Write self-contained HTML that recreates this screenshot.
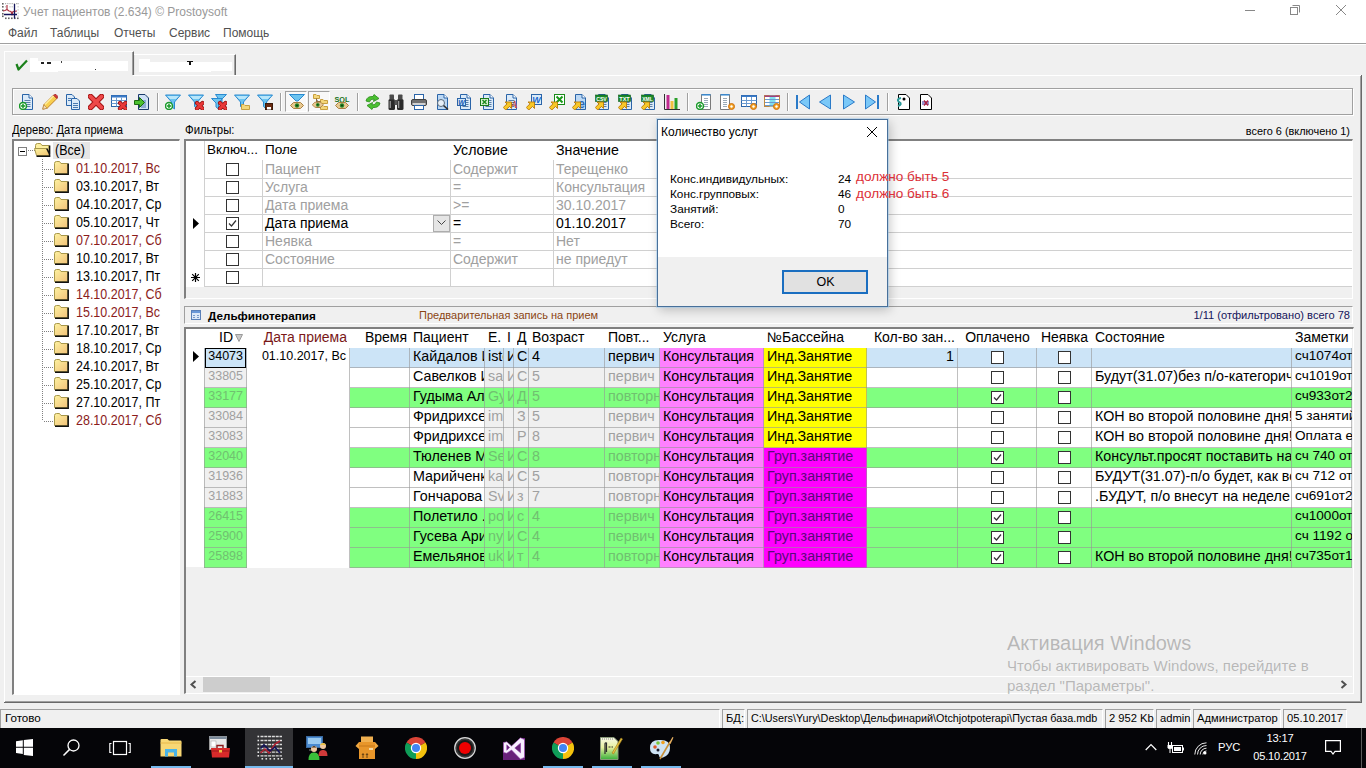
<!DOCTYPE html><html><head><meta charset="utf-8"><style>
html,body{margin:0;padding:0;}
body{width:1366px;height:768px;position:relative;overflow:hidden;background:#f0f0f0;font-family:"Liberation Sans", sans-serif;}
.t{position:absolute;white-space:pre;line-height:1.2;}
div{box-sizing:border-box;}
</style></head><body>
<div style="position:absolute;left:0px;top:0px;width:1366px;height:43px;background:#fff;"></div>
<div style="position:absolute;left:0px;top:43px;width:1366px;height:1px;background:#a0a0a0;"></div>
<div style="position:absolute;left:0px;top:44px;width:1366px;height:1px;background:#fff;"></div>
<svg style="position:absolute;left:0;top:0" width="24" height="24"><rect x="2" y="3" width="1.6" height="1.6" fill="#606060"/><rect x="2" y="6" width="1.6" height="1.6" fill="#606060"/><rect x="2" y="9.5" width="1.6" height="1.6" fill="#606060"/><rect x="2" y="13" width="1.6" height="1.6" fill="#606060"/><rect x="2" y="15.5" width="1.6" height="1.6" fill="#606060"/><rect x="5" y="17.5" width="1.6" height="1.6" fill="#606060"/><rect x="8" y="17.5" width="1.6" height="1.6" fill="#606060"/><rect x="11" y="17.5" width="1.6" height="1.6" fill="#606060"/><rect x="14" y="17.5" width="1.6" height="1.6" fill="#606060"/><rect x="17" y="17.5" width="1.6" height="1.6" fill="#606060"/><rect x="5" y="3" width="1.2" height="1.2" fill="#b0b0b0"/><rect x="7.2" y="3" width="1.2" height="1.2" fill="#b0b0b0"/><rect x="9.4" y="3" width="1.2" height="1.2" fill="#b0b0b0"/><rect x="11.6" y="3" width="1.2" height="1.2" fill="#b0b0b0"/><rect x="13.8" y="3" width="1.2" height="1.2" fill="#b0b0b0"/><rect x="16" y="3" width="1.2" height="1.2" fill="#b0b0b0"/><rect x="17.5" y="3" width="1.2" height="1.2" fill="#b0b0b0"/><rect x="5" y="6.2" width="1.2" height="1.2" fill="#c0c0c0"/><rect x="9.4" y="6.2" width="1.2" height="1.2" fill="#c0c0c0"/><rect x="11.6" y="6.2" width="1.2" height="1.2" fill="#c0c0c0"/><rect x="17.5" y="6.2" width="1.2" height="1.2" fill="#c0c0c0"/><rect x="17.5" y="9.3" width="1.2" height="1.2" fill="#c0c0c0"/><rect x="17.5" y="12.5" width="1.2" height="1.2" fill="#c0c0c0"/><rect x="17.5" y="15.5" width="1.2" height="1.2" fill="#c0c0c0"/><path d="M3 11 L5 10.5 L7 9.5 V5 M7 9.5 L9 11 L11 11.5 L12 14.5 L13 11.5 L17 11" stroke="#a82838" stroke-width="1.1" fill="none"/><path d="M4 14.5 H17 M14.5 4 V18.5" stroke="#14145a" stroke-width="1.3"/></svg>
<div class="t" style="left:23px;top:4.8px;font-size:12px;color:#999;">Учет пациентов (2.634) © Prostoysoft</div>
<svg style="position:absolute;left:1240px;top:0" width="126" height="22"><path d="M5 10.5 H15" stroke="#888" stroke-width="1"/><rect x="50.5" y="7.5" width="7" height="7" fill="none" stroke="#888"/><path d="M52.5 5.5 H59.5 V12.5" fill="none" stroke="#888"/><path d="M96 5 L106 15 M106 5 L96 15" stroke="#888" stroke-width="1"/></svg>
<div class="t" style="left:8px;top:25.8px;font-size:12px;color:#505050;">Файл</div>
<div class="t" style="left:50px;top:25.8px;font-size:12px;color:#505050;">Таблицы</div>
<div class="t" style="left:114px;top:25.8px;font-size:12px;color:#505050;">Отчеты</div>
<div class="t" style="left:169px;top:25.8px;font-size:12px;color:#505050;">Сервис</div>
<div class="t" style="left:223px;top:25.8px;font-size:12px;color:#505050;">Помощь</div>
<div style="position:absolute;left:133px;top:54px;width:103px;height:22px;border-top:1px solid #fff;border-right:1px solid #696969;background:#f0f0f0;"></div>
<div style="position:absolute;left:134px;top:55px;width:1px;height:20px;background:#e3e3e3;"></div>
<div style="position:absolute;left:234px;top:55px;width:1px;height:20px;background:#a0a0a0;"></div>
<div style="position:absolute;left:4px;top:51px;width:130px;height:25px;border-top:1px solid #fff;border-left:1px solid #fff;border-right:1px solid #696969;background:#f0f0f0;"></div>
<div style="position:absolute;left:132px;top:52px;width:1px;height:23px;background:#a0a0a0;"></div>
<div style="position:absolute;left:30px;top:58px;width:8px;height:14px;background:#fff;"></div>
<div style="position:absolute;left:30px;top:61px;width:98px;height:10px;background:#fff;"></div>
<div style="position:absolute;left:30px;top:70px;width:28px;height:2px;background:#fff;"></div>
<div style="position:absolute;left:41px;top:62px;width:3px;height:2px;background:#222;"></div>
<div style="position:absolute;left:47px;top:62px;width:4px;height:2px;background:#222;"></div>
<div style="position:absolute;left:61px;top:61px;width:1px;height:2px;background:#444;"></div>
<div style="position:absolute;left:95px;top:69px;width:1px;height:1px;background:#333;"></div>
<div style="position:absolute;left:139px;top:59px;width:11px;height:12px;background:#fff;"></div>
<div style="position:absolute;left:139px;top:62px;width:93px;height:9px;background:#fff;"></div>
<div style="position:absolute;left:139px;top:70px;width:72px;height:2px;background:#fff;"></div>
<div style="position:absolute;left:187px;top:61px;width:6px;height:1px;background:#111;"></div>
<div style="position:absolute;left:189px;top:61px;width:2px;height:4px;background:#111;"></div>
<svg style="position:absolute;left:15px;top:59px" width="14" height="12"><path d="M1.5 5 L3.5 10.5 L12 1.5" stroke="#1a801a" stroke-width="2.2" fill="none" stroke-linejoin="round"/></svg>
<div style="position:absolute;left:133px;top:75px;width:1228px;height:1px;background:#fff;"></div>
<div style="position:absolute;left:4px;top:75px;width:1px;height:628px;background:#fff;"></div>
<div style="position:absolute;left:1361px;top:75px;width:1px;height:628px;background:#696969;"></div>
<div style="position:absolute;left:1360px;top:76px;width:1px;height:626px;background:#a0a0a0;"></div>
<div style="position:absolute;left:4px;top:702px;width:1358px;height:1px;background:#696969;"></div>
<div style="position:absolute;left:5px;top:701px;width:1355px;height:1px;background:#a0a0a0;"></div>
<div style="position:absolute;left:12px;top:88px;width:1341px;height:27px;border-top:1px solid #a0a0a0;border-left:1px solid #a0a0a0;border-bottom:1px solid #a0a0a0;border-right:1px solid #a0a0a0;box-shadow:inset 1px 1px 0 #fff, 1px 1px 0 #fff;"></div>
<div style="position:absolute;left:157px;top:93px;width:1px;height:18px;background:#a0a0a0;"></div>
<div style="position:absolute;left:158px;top:93px;width:1px;height:18px;background:#fff;"></div>
<div style="position:absolute;left:280px;top:93px;width:1px;height:18px;background:#a0a0a0;"></div>
<div style="position:absolute;left:281px;top:93px;width:1px;height:18px;background:#fff;"></div>
<div style="position:absolute;left:357px;top:93px;width:1px;height:18px;background:#a0a0a0;"></div>
<div style="position:absolute;left:358px;top:93px;width:1px;height:18px;background:#fff;"></div>
<div style="position:absolute;left:687px;top:93px;width:1px;height:18px;background:#a0a0a0;"></div>
<div style="position:absolute;left:688px;top:93px;width:1px;height:18px;background:#fff;"></div>
<div style="position:absolute;left:787px;top:93px;width:1px;height:18px;background:#a0a0a0;"></div>
<div style="position:absolute;left:788px;top:93px;width:1px;height:18px;background:#fff;"></div>
<div style="position:absolute;left:887px;top:93px;width:1px;height:18px;background:#a0a0a0;"></div>
<div style="position:absolute;left:888px;top:93px;width:1px;height:18px;background:#fff;"></div>
<div style="position:absolute;left:285px;top:91px;width:22px;height:21px;border-top:1px solid #a0a0a0;border-left:1px solid #a0a0a0;border-bottom:1px solid #fff;border-right:1px solid #fff;background:#f8f8f8;"></div>
<div style="position:absolute;left:308px;top:91px;width:22px;height:21px;border-top:1px solid #a0a0a0;border-left:1px solid #a0a0a0;border-bottom:1px solid #fff;border-right:1px solid #fff;background:#f8f8f8;"></div>
<svg style="position:absolute;left:19px;top:94px" width="16" height="16" viewBox="0 0 16 16"><path d="M3.5 0.5 H10 L13.5 4 V15.5 H3.5Z" fill="#dbeaf8" stroke="#2a64a8"/><path d="M10 0.5 V4 H13.5" fill="#fff" stroke="#2a64a8"/><path d="M5.5 6.5 H11.5 M5.5 8.5 H11.5 M5.5 10.5 H11.5 M5.5 12.5 H11.5" stroke="#5a7fa8"/><circle cx="4" cy="12" r="3.5" fill="#fff" stroke="#1a9a2a" stroke-width="1.5"/><path d="M4 9.8 V14.2 M1.8 12 H6.2" stroke="#1a9a2a" stroke-width="1.5"/></svg>
<svg style="position:absolute;left:42px;top:94px" width="16" height="16" viewBox="0 0 16 16"><path d="M0.8 15.2 L1.8 10.8 L11.5 1.1 L14.9 4.5 L5.2 14.2 Z" fill="#f8cf50" stroke="#c0802a" stroke-width="1"/><path d="M3 10.5 L12 1.5" stroke="#fff0a0" stroke-width="1.2"/><path d="M11.5 1.1 L14.9 4.5 L15.5 3.2 Q15.5 1.5 14 0.5 Q12.8 0.3 11.5 1.1Z" fill="#d83a3a" stroke="#a02020" stroke-width="0.8"/><path d="M0.8 15.2 L1.8 10.8 L5.2 14.2Z" fill="#f4dcb0" stroke="#b08040" stroke-width="0.6"/></svg>
<svg style="position:absolute;left:65px;top:94px" width="16" height="16" viewBox="0 0 16 16"><path d="M1.5 0.5 H7 L9.5 3 V11.5 H1.5Z" fill="#dbeaf8" stroke="#2a64a8"/><path d="M6.5 4.5 H12 L14.5 7 V15.5 H6.5Z" fill="#dbeaf8" stroke="#2a64a8"/><path d="M3 4.5 H6 M3 6.5 H6 M8 9.5 H13 M8 11.5 H13 M8 13.5 H13" stroke="#4a7ab0"/></svg>
<svg style="position:absolute;left:88px;top:94px" width="16" height="16" viewBox="0 0 16 16"><path d="M2.5 2.5 L13.5 13.5 M13.5 2.5 L2.5 13.5" stroke="#a01010" stroke-width="5.6" stroke-linecap="round"/><path d="M2.5 2.5 L13.5 13.5 M13.5 2.5 L2.5 13.5" stroke="#ee4848" stroke-width="3.8" stroke-linecap="round"/></svg>
<svg style="position:absolute;left:111px;top:94px" width="16" height="16" viewBox="0 0 16 16"><rect x="0.5" y="1.5" width="15" height="11" fill="#fff" stroke="#2a64a8"/><rect x="0.5" y="1.5" width="15" height="2" fill="#3a7ac8"/><path d="M0.5 6.5 H15.5 M0.5 9.5 H15.5 M5.5 3.5 V12.5 M10.5 3.5 V12.5" stroke="#6a9ad0"/><path d="M9 9 L14.5 14.5 M14.5 9 L9 14.5" stroke="#901010" stroke-width="4.2" stroke-linecap="round"/><path d="M9 9 L14.5 14.5 M14.5 9 L9 14.5" stroke="#e83838" stroke-width="2.6" stroke-linecap="round"/></svg>
<svg style="position:absolute;left:134px;top:94px" width="16" height="16" viewBox="0 0 16 16"><path d="M4.5 0.5 H11 L14.5 4 V15.5 H4.5Z" fill="#cfe0f5" stroke="#1a3a6a"/><path d="M7 7 H12 M7 9 H12 M7 11 H12 M7 13 H12" stroke="#4a7ab0"/><path d="M0.5 6.5 H5.5 V3.5 L10.5 8.5 L5.5 13.5 V10.5 H0.5Z" fill="#4ac030" stroke="#1a6a10"/></svg>
<svg style="position:absolute;left:165px;top:94px" width="16" height="16" viewBox="0 0 16 16"><path d="M0.5 1 H15.5 L9.5 8 V15 L6.5 12.5 V8 Z" fill="#6cc4f0" stroke="#2a8ad0"/><path d="M2 2 H14 L11 5 H5Z" fill="#b8e6fa"/><circle cx="4" cy="12" r="3.5" fill="#fff" stroke="#1a9a2a" stroke-width="1.5"/><path d="M4 9.8 V14.2 M1.8 12 H6.2" stroke="#1a9a2a" stroke-width="1.5"/></svg>
<svg style="position:absolute;left:188px;top:94px" width="16" height="16" viewBox="0 0 16 16"><path d="M0.5 1 H15.5 L9.5 8 V15 L6.5 12.5 V8 Z" fill="#6cc4f0" stroke="#2a8ad0"/><path d="M2 2 H14 L11 5 H5Z" fill="#b8e6fa"/><path d="M9 9 L14.5 14.5 M14.5 9 L9 14.5" stroke="#901010" stroke-width="4.2" stroke-linecap="round"/><path d="M9 9 L14.5 14.5 M14.5 9 L9 14.5" stroke="#e83838" stroke-width="2.6" stroke-linecap="round"/></svg>
<svg style="position:absolute;left:211px;top:94px" width="16" height="16" viewBox="0 0 16 16"><path d="M4.5 0.5 H15.5 L11 5 V10 Z" fill="#6cc4f0" stroke="#2a8ad0"/><path d="M0.5 4.5 H11.5 L7.5 9 V15 L5 13 V9Z" fill="#6cc4f0" stroke="#2a8ad0"/><path d="M9 9 L14.5 14.5 M14.5 9 L9 14.5" stroke="#901010" stroke-width="4.2" stroke-linecap="round"/><path d="M9 9 L14.5 14.5 M14.5 9 L9 14.5" stroke="#e83838" stroke-width="2.6" stroke-linecap="round"/></svg>
<svg style="position:absolute;left:234px;top:94px" width="16" height="16" viewBox="0 0 16 16"><path d="M0.5 1 H15.5 L9.5 8 V15 L6.5 12.5 V8 Z" fill="#6cc4f0" stroke="#2a8ad0"/><path d="M2 2 H14 L11 5 H5Z" fill="#b8e6fa"/><path d="M7.5 10.5 H10 L11 11.5 H15.5 V15.5 H7.5Z" fill="#f4d77a" stroke="#c8a040"/></svg>
<svg style="position:absolute;left:257px;top:94px" width="16" height="16" viewBox="0 0 16 16"><path d="M0.5 1 H15.5 L9.5 8 V15 L6.5 12.5 V8 Z" fill="#6cc4f0" stroke="#2a8ad0"/><path d="M2 2 H14 L11 5 H5Z" fill="#b8e6fa"/><rect x="8.5" y="9.5" width="7" height="6" fill="#6a2a10" stroke="#3a1a0a"/><rect x="10" y="13" width="4" height="2.5" fill="#fff"/></svg>
<svg style="position:absolute;left:289px;top:94px" width="16" height="16" viewBox="0 0 16 16"><path d="M0.5 0.5 H15.5 L9 7 H7Z" fill="#6cc4f0" stroke="#2a8ad0"/><path d="M1.5 11.5 L4.5 8.5 H11.5 L14.5 11.5 L11.5 14.5 H4.5Z" fill="#e8c890" stroke="#a88040"/><circle cx="8" cy="11.5" r="2.2" fill="#2a8a2a"/><circle cx="8" cy="11.5" r="0.9" fill="#0a3a0a"/></svg>
<svg style="position:absolute;left:312px;top:94px" width="16" height="16" viewBox="0 0 16 16"><path d="M1.5 0.5 H4 L5 1.5 H7.5 V4.5 H1.5Z" fill="#f4d77a" stroke="#c8a040"/><path d="M8.5 5.5 H11 L12 6.5 H15.5 V9.5 H8.5Z" fill="#f4d77a" stroke="#c8a040"/><path d="M8.5 11.5 H11 L12 12.5 H15.5 V15.5 H8.5Z" fill="#f4d77a" stroke="#c8a040"/><path d="M4.5 4.5 V13.5 H8.5 M4.5 7.5 H8.5" stroke="#8a6a3a"/><g transform="translate(-1,1) scale(0.85)"><path d="M1.5 11.5 L4.5 8.5 H11.5 L14.5 11.5 L11.5 14.5 H4.5Z" fill="#e8c890" stroke="#a88040"/><circle cx="8" cy="11.5" r="2.2" fill="#2a8a2a"/><circle cx="8" cy="11.5" r="0.9" fill="#0a3a0a"/></g></svg>
<svg style="position:absolute;left:334px;top:94px" width="16" height="16" viewBox="0 0 16 16"><text x="8" y="7.5" font-family="Liberation Sans" font-weight="bold" font-size="8" fill="#187018" text-anchor="middle" textLength="15" lengthAdjust="spacingAndGlyphs">SQL</text><path d="M1.5 11.5 L4.5 8.5 H11.5 L14.5 11.5 L11.5 14.5 H4.5Z" fill="#e8c890" stroke="#a88040"/><circle cx="8" cy="11.5" r="2.2" fill="#2a8a2a"/><circle cx="8" cy="11.5" r="0.9" fill="#0a3a0a"/></svg>
<svg style="position:absolute;left:365px;top:94px" width="16" height="16" viewBox="0 0 16 16"><path d="M1 7 Q2 2 8 2.5 L9 0.5 L14 4.5 L8.5 7.5 L9 5 Q5 5 4.5 8Z" fill="#4ac030" stroke="#2a8a1a" stroke-width="0.8"/><path d="M15 9 Q14 14 8 13.5 L7 15.5 L2 11.5 L7.5 8.5 L7 11 Q11 11 11.5 8Z" fill="#4ac030" stroke="#2a8a1a" stroke-width="0.8"/></svg>
<svg style="position:absolute;left:388px;top:94px" width="16" height="16" viewBox="0 0 16 16"><rect x="0.5" y="5" width="6.5" height="11" rx="1.5" fill="#2a2a2a"/><rect x="9" y="5" width="6.5" height="11" rx="1.5" fill="#2a2a2a"/><rect x="1.5" y="0.5" width="4.5" height="5" rx="0.8" fill="#4a4a4a"/><rect x="10" y="0.5" width="4.5" height="5" rx="0.8" fill="#4a4a4a"/><rect x="6.5" y="6" width="3" height="5" fill="#555"/><path d="M2.2 7 V14 M10.7 7 V14" stroke="#aaa" stroke-width="1.1"/></svg>
<svg style="position:absolute;left:411px;top:94px" width="16" height="16" viewBox="0 0 16 16"><rect x="3.5" y="0.5" width="9" height="5" fill="#fff" stroke="#2a64a8"/><rect x="0.5" y="5.5" width="15" height="6" rx="1.5" fill="#707070" stroke="#404040"/><rect x="1.5" y="9" width="13" height="2" fill="#d0d0d0"/><rect x="3.5" y="11.5" width="9" height="4" fill="#fff" stroke="#2a64a8"/></svg>
<svg style="position:absolute;left:434px;top:94px" width="16" height="16" viewBox="0 0 16 16"><path d="M3.5 0.5 H10 L13.5 4 V15.5 H3.5Z" fill="#bcd8f4" stroke="#2a64a8"/><path d="M10 0.5 V4 H13.5" fill="#fff" stroke="#2a64a8"/><circle cx="7" cy="9" r="3.5" fill="#e8f0f8" stroke="#5a6a7a"/><path d="M9.5 11.5 L14 15.5" stroke="#303030" stroke-width="1.6"/></svg>
<svg style="position:absolute;left:457px;top:94px" width="16" height="16" viewBox="0 0 16 16"><path d="M3.5 0.5 H10 L13.5 4 V15.5 H3.5Z" fill="#dbeaf8" stroke="#2a64a8"/><path d="M10 0.5 V4 H13.5" fill="#fff" stroke="#2a64a8"/><path d="M5.5 6.5 H11.5 M5.5 8.5 H11.5 M5.5 10.5 H11.5 M5.5 12.5 H11.5" stroke="#5a7fa8"/><rect x="0.5" y="4.5" width="8" height="7" fill="#cfe6fa" stroke="#2a64a8"/><text x="4.5" y="10.5" font-family="Liberation Sans" font-weight="bold" font-style="italic" font-size="7" fill="#1a5ab0" text-anchor="middle">W</text></svg>
<svg style="position:absolute;left:480px;top:94px" width="16" height="16" viewBox="0 0 16 16"><path d="M3.5 0.5 H10 L13.5 4 V15.5 H3.5Z" fill="#dbeaf8" stroke="#2a64a8"/><path d="M10 0.5 V4 H13.5" fill="#fff" stroke="#2a64a8"/><path d="M5.5 6.5 H11.5 M5.5 8.5 H11.5 M5.5 10.5 H11.5 M5.5 12.5 H11.5" stroke="#5a7fa8"/><rect x="0.5" y="4.5" width="8" height="7" fill="#d8f0d0" stroke="#1a7a1a"/><path d="M2.5 6 L6.5 10 M6.5 6 L2.5 10" stroke="#1a8a1a" stroke-width="1.4"/></svg>
<svg style="position:absolute;left:503px;top:94px" width="16" height="16" viewBox="0 0 16 16"><path d="M3.5 0.5 H10 L13.5 4 V15.5 H3.5Z" fill="#dbeaf8" stroke="#2a64a8"/><path d="M10 0.5 V4 H13.5" fill="#fff" stroke="#2a64a8"/><path d="M5.5 6.5 H11.5 M5.5 8.5 H11.5 M5.5 10.5 H11.5 M5.5 12.5 H11.5" stroke="#5a7fa8"/><text x="11" y="14" font-family="Liberation Serif" font-style="italic" font-size="10" fill="#c03030" text-anchor="middle">A</text><path d="M8.5 8 V14.5 L6.5 12.5 L2.8 16 L0.3 13.5 L4 9.8 L2 8Z" fill="#f8c828" stroke="#b8780a" stroke-width="0.9" stroke-linejoin="round"/></svg>
<svg style="position:absolute;left:526px;top:94px" width="16" height="16" viewBox="0 0 16 16"><rect x="5.5" y="0.5" width="10" height="10" fill="#dbeaf8" stroke="#2a64a8"/><text x="10.5" y="9" font-family="Liberation Sans" font-weight="bold" font-style="italic" font-size="9" fill="#1a6ad0" text-anchor="middle">W</text><path d="M8.5 8 V14.5 L6.5 12.5 L2.8 16 L0.3 13.5 L4 9.8 L2 8Z" fill="#f8c828" stroke="#b8780a" stroke-width="0.9" stroke-linejoin="round"/></svg>
<svg style="position:absolute;left:549px;top:94px" width="16" height="16" viewBox="0 0 16 16"><rect x="5.5" y="0.5" width="10" height="10" fill="#fff" stroke="#1a8a1a"/><path d="M7.5 2.5 L13.5 8.5 M13.5 2.5 L7.5 8.5" stroke="#1a9a1a" stroke-width="2"/><path d="M8.5 8 V14.5 L6.5 12.5 L2.8 16 L0.3 13.5 L4 9.8 L2 8Z" fill="#f8c828" stroke="#b8780a" stroke-width="0.9" stroke-linejoin="round"/></svg>
<svg style="position:absolute;left:572px;top:94px" width="16" height="16" viewBox="0 0 16 16"><path d="M3.5 0.5 H10 L13.5 4 V15.5 H3.5Z" fill="#bcd8f4" stroke="#2a64a8"/><path d="M10 0.5 V4 H13.5" fill="#fff" stroke="#2a64a8"/><text x="9.5" y="13.5" font-family="Liberation Sans" font-weight="bold" font-size="12" fill="#2a6ab8" text-anchor="middle">e</text><path d="M8.5 8 V14.5 L6.5 12.5 L2.8 16 L0.3 13.5 L4 9.8 L2 8Z" fill="#f8c828" stroke="#b8780a" stroke-width="0.9" stroke-linejoin="round"/></svg>
<svg style="position:absolute;left:595px;top:94px" width="16" height="16" viewBox="0 0 16 16"><path d="M3.5 0.5 H10 L13.5 4 V15.5 H3.5Z" fill="#dbeaf8" stroke="#2a64a8"/><path d="M10 0.5 V4 H13.5" fill="#fff" stroke="#2a64a8"/><path d="M5.5 6.5 H11.5 M5.5 8.5 H11.5 M5.5 10.5 H11.5 M5.5 12.5 H11.5" stroke="#5a7fa8"/><rect x="0.5" y="1" width="12" height="6.5" fill="#1a8a2a" stroke="#0a5a1a" stroke-width="0.6"/><text x="6.5" y="6.6" font-family="Liberation Sans" font-weight="bold" font-size="6.2" fill="#fff" text-anchor="middle" textLength="10.5" lengthAdjust="spacingAndGlyphs">CSV</text><path d="M8.5 8 V14.5 L6.5 12.5 L2.8 16 L0.3 13.5 L4 9.8 L2 8Z" fill="#f8c828" stroke="#b8780a" stroke-width="0.9" stroke-linejoin="round"/></svg>
<svg style="position:absolute;left:618px;top:94px" width="16" height="16" viewBox="0 0 16 16"><path d="M3.5 0.5 H10 L13.5 4 V15.5 H3.5Z" fill="#dbeaf8" stroke="#2a64a8"/><path d="M10 0.5 V4 H13.5" fill="#fff" stroke="#2a64a8"/><path d="M5.5 6.5 H11.5 M5.5 8.5 H11.5 M5.5 10.5 H11.5 M5.5 12.5 H11.5" stroke="#5a7fa8"/><rect x="0.5" y="1" width="12" height="6.5" fill="#1a8a2a" stroke="#0a5a1a" stroke-width="0.6"/><text x="6.5" y="6.6" font-family="Liberation Sans" font-weight="bold" font-size="6.2" fill="#fff" text-anchor="middle" textLength="10.5" lengthAdjust="spacingAndGlyphs">TXT</text><path d="M8.5 8 V14.5 L6.5 12.5 L2.8 16 L0.3 13.5 L4 9.8 L2 8Z" fill="#f8c828" stroke="#b8780a" stroke-width="0.9" stroke-linejoin="round"/></svg>
<svg style="position:absolute;left:641px;top:94px" width="16" height="16" viewBox="0 0 16 16"><path d="M3.5 0.5 H10 L13.5 4 V15.5 H3.5Z" fill="#dbeaf8" stroke="#2a64a8"/><path d="M10 0.5 V4 H13.5" fill="#fff" stroke="#2a64a8"/><path d="M5.5 6.5 H11.5 M5.5 8.5 H11.5 M5.5 10.5 H11.5 M5.5 12.5 H11.5" stroke="#5a7fa8"/><rect x="0.5" y="1" width="12" height="6.5" fill="#1a8a2a" stroke="#0a5a1a" stroke-width="0.6"/><text x="6.5" y="6.6" font-family="Liberation Sans" font-weight="bold" font-size="6.2" fill="#fff" text-anchor="middle" textLength="10.5" lengthAdjust="spacingAndGlyphs">XML</text><path d="M8.5 8 V14.5 L6.5 12.5 L2.8 16 L0.3 13.5 L4 9.8 L2 8Z" fill="#f8c828" stroke="#b8780a" stroke-width="0.9" stroke-linejoin="round"/></svg>
<svg style="position:absolute;left:664px;top:94px" width="16" height="16" viewBox="0 0 16 16"><path d="M0.5 0 V15.5 H16" stroke="#303030" fill="none"/><rect x="2.5" y="1" width="3" height="14" fill="#c02a90"/><rect x="6.5" y="7" width="3" height="8" fill="#f0c040"/><rect x="10.5" y="4" width="3" height="11" fill="#2aa02a"/></svg>
<svg style="position:absolute;left:696px;top:94px" width="16" height="16" viewBox="0 0 16 16"><path d="M5.5 0.5 H14.5 V15.5 H5.5Z" fill="#fff" stroke="#7a7a7a"/><path d="M5.5 0.8 H14.5" stroke="#3a8ad0" stroke-width="1.5"/><path d="M8 4.5 H12 M8 6.5 H12 M8 8.5 H12 M8 10.5 H12 M8 12.5 H12" stroke="#9aaab8"/><circle cx="4" cy="12" r="3.5" fill="#fff" stroke="#1a9a2a" stroke-width="1.5"/><path d="M4 9.8 V14.2 M1.8 12 H6.2" stroke="#1a9a2a" stroke-width="1.5"/></svg>
<svg style="position:absolute;left:719px;top:94px" width="16" height="16" viewBox="0 0 16 16"><path d="M1.5 0.5 H10.5 V15.5 H1.5Z" fill="#fff" stroke="#7a7a7a"/><path d="M1.5 0.8 H10.5" stroke="#3a8ad0" stroke-width="1.5"/><path d="M4 4.5 H8 M4 6.5 H8 M4 8.5 H8 M4 10.5 H8 M4 12.5 H8" stroke="#9aaab8"/><circle cx="12.5" cy="12.5" r="3" fill="#f0a020" stroke="#d07010"/><circle cx="12.5" cy="12.5" r="1.2" fill="#fff"/></svg>
<svg style="position:absolute;left:741px;top:94px" width="16" height="16" viewBox="0 0 16 16"><rect x="0.5" y="1.5" width="15" height="11" fill="#fff" stroke="#2a64a8"/><rect x="0.5" y="1.5" width="15" height="1.5" fill="#3a7ac8"/><path d="M0.5 6.5 H15.5 M0.5 9.5 H15.5 M5.5 3 V12.5 M10.5 3 V12.5" stroke="#6a9ad0"/><circle cx="12.5" cy="12.5" r="3" fill="#f0a020" stroke="#d07010"/><circle cx="12.5" cy="12.5" r="1.2" fill="#fff"/></svg>
<svg style="position:absolute;left:764px;top:94px" width="16" height="16" viewBox="0 0 16 16"><rect x="0.5" y="1.5" width="15" height="11" fill="#fff" stroke="#c08a40"/><rect x="5.5" y="1.5" width="6" height="11" fill="#80e0f0"/><rect x="0.5" y="1.5" width="15" height="1.5" fill="#a04080"/><path d="M1 5.5 H15 M1 8.5 H15 M1 11.5 H15" stroke="#6a9ad0"/><circle cx="12.5" cy="12.5" r="3" fill="#f0a020" stroke="#d07010"/><circle cx="12.5" cy="12.5" r="1.2" fill="#fff"/></svg>
<svg style="position:absolute;left:795px;top:94px" width="16" height="16" viewBox="0 0 16 16"><rect x="1" y="1" width="2" height="14" fill="#2a7ac8"/><path d="M14.5 1 V15 L4.5 8Z" fill="#7ac8f8" stroke="#2a7ac8"/></svg>
<svg style="position:absolute;left:818px;top:94px" width="16" height="16" viewBox="0 0 16 16"><path d="M12.5 1 V15 L1.5 8Z" fill="#7ac8f8" stroke="#2a7ac8"/></svg>
<svg style="position:absolute;left:841px;top:94px" width="16" height="16" viewBox="0 0 16 16"><path d="M2.5 1 V15 L13.5 8Z" fill="#7ac8f8" stroke="#2a7ac8"/></svg>
<svg style="position:absolute;left:864px;top:94px" width="16" height="16" viewBox="0 0 16 16"><rect x="13" y="1" width="2" height="14" fill="#2a7ac8"/><path d="M1.5 1 V15 L11.5 8Z" fill="#7ac8f8" stroke="#2a7ac8"/></svg>
<svg style="position:absolute;left:895px;top:94px" width="16" height="16" viewBox="0 0 16 16"><path d="M3.5 0.5 H11 L14.5 4 V15.5 H3.5Z" fill="#fff" stroke="#000"/><path d="M6 4 Q1 5 4 8 Q8 10 3 12" stroke="#2a9a9a" stroke-width="2" fill="none"/><circle cx="9" cy="5" r="1.5" fill="#000"/></svg>
<svg style="position:absolute;left:919px;top:94px" width="16" height="16" viewBox="0 0 16 16"><path d="M1.5 0.5 H9 L12.5 4 V15.5 H1.5Z" fill="#fff" stroke="#000"/><path d="M3 8 H10 M3 10 H10" stroke="#3030a0"/><path d="M5 6.5 L9 11.5 M9 6.5 L5 11.5" stroke="#b02040" stroke-width="1.3"/></svg>
<div class="t" style="left:12px;top:123.2px;font-size:12px;color:#000;transform:scaleX(0.9319);transform-origin:0 0;">Дерево: Дата приема</div>
<div class="t" style="left:185px;top:123.2px;font-size:12px;color:#000;transform:scaleX(0.9470);transform-origin:0 0;">Фильтры:</div>
<div class="t" style="right:16px;top:124.5px;font-size:10.9px;color:#000;">всего 6 (включено 1)</div>
<div style="position:absolute;left:12px;top:139px;width:168px;height:556px;background:#fff;border-top:2px solid #808080;border-left:2px solid #808080;border-bottom:1px solid #fff;border-right:1px solid #fff;"></div>
<div style="position:absolute;left:18px;top:147px;width:9px;height:9px;border:1px solid #808080;background:#fff;"></div>
<div style="position:absolute;left:20px;top:151px;width:5px;height:1px;background:#000;"></div>
<svg style="position:absolute;left:27px;top:150px" width="8" height="2"><path d="M1 0.5 H8" stroke="#808080" stroke-dasharray="1 1"/></svg>
<svg style="position:absolute;left:34px;top:143px" width="17" height="14" viewBox="0 0 17 14"><defs><linearGradient id="fo" x1="0" y1="0" x2="1" y2="1"><stop offset="0" stop-color="#fdf6a0"/><stop offset="1" stop-color="#f0c070"/></linearGradient></defs><path d="M1.5 6 V2.5 Q1.5 0.5 3.5 0.5 H6.5 L8 2.5 H15 V12.5" fill="#fdf0a0" stroke="#a8984a" stroke-width="1"/><path d="M0.5 5.5 H12.5 L15.5 12.5 H2.5Z" fill="url(#fo)" stroke="#a8984a" stroke-width="1"/><path d="M12.8 5.5 L15.8 11.5 M15.6 2.5 V13.3 H2.5" stroke="#111" stroke-width="1.5" fill="none"/></svg>
<div style="position:absolute;left:53px;top:142px;width:37px;height:17px;background:#e6e6e6;"></div>
<div class="t" style="left:55px;top:142.5px;font-size:13.8px;color:#000;transform:scaleX(0.9048);transform-origin:0 0;">(Все)</div>
<svg style="position:absolute;left:42px;top:159px" width="1" height="262"><path d="M0.5 0 V262" stroke="#808080" stroke-dasharray="1 1"/></svg>
<svg style="position:absolute;left:43px;top:169px" width="10" height="2"><path d="M1 0.5 H10" stroke="#808080" stroke-dasharray="1 1"/></svg>
<svg style="position:absolute;left:54px;top:161px" width="16" height="14" viewBox="0 0 16 14"><defs><linearGradient id="fg" x1="0" y1="0" x2="1" y2="1"><stop offset="0" stop-color="#fdf2a0"/><stop offset="1" stop-color="#f2c27a"/></linearGradient></defs><path d="M0.5 12.5 V2.5 Q0.5 0.5 2.5 0.5 H5.5 L7 2.5 H13.5 V12.5Z" fill="url(#fg)" stroke="#a8984a" stroke-width="1"/><path d="M14.2 2.5 V13.3 H1" stroke="#111" stroke-width="1.5" fill="none"/></svg>
<div class="t" style="left:76px;top:160.7px;font-size:13.8px;color:#8b1c1c;transform:scaleX(0.9048);transform-origin:0 0;">01.10.2017, Вс</div>
<svg style="position:absolute;left:43px;top:187px" width="10" height="2"><path d="M1 0.5 H10" stroke="#808080" stroke-dasharray="1 1"/></svg>
<svg style="position:absolute;left:54px;top:179px" width="16" height="14" viewBox="0 0 16 14"><defs><linearGradient id="fg" x1="0" y1="0" x2="1" y2="1"><stop offset="0" stop-color="#fdf2a0"/><stop offset="1" stop-color="#f2c27a"/></linearGradient></defs><path d="M0.5 12.5 V2.5 Q0.5 0.5 2.5 0.5 H5.5 L7 2.5 H13.5 V12.5Z" fill="url(#fg)" stroke="#a8984a" stroke-width="1"/><path d="M14.2 2.5 V13.3 H1" stroke="#111" stroke-width="1.5" fill="none"/></svg>
<div class="t" style="left:76px;top:178.7px;font-size:13.8px;color:#000;transform:scaleX(0.9048);transform-origin:0 0;">03.10.2017, Вт</div>
<svg style="position:absolute;left:43px;top:205px" width="10" height="2"><path d="M1 0.5 H10" stroke="#808080" stroke-dasharray="1 1"/></svg>
<svg style="position:absolute;left:54px;top:197px" width="16" height="14" viewBox="0 0 16 14"><defs><linearGradient id="fg" x1="0" y1="0" x2="1" y2="1"><stop offset="0" stop-color="#fdf2a0"/><stop offset="1" stop-color="#f2c27a"/></linearGradient></defs><path d="M0.5 12.5 V2.5 Q0.5 0.5 2.5 0.5 H5.5 L7 2.5 H13.5 V12.5Z" fill="url(#fg)" stroke="#a8984a" stroke-width="1"/><path d="M14.2 2.5 V13.3 H1" stroke="#111" stroke-width="1.5" fill="none"/></svg>
<div class="t" style="left:76px;top:196.7px;font-size:13.8px;color:#000;transform:scaleX(0.9048);transform-origin:0 0;">04.10.2017, Ср</div>
<svg style="position:absolute;left:43px;top:223px" width="10" height="2"><path d="M1 0.5 H10" stroke="#808080" stroke-dasharray="1 1"/></svg>
<svg style="position:absolute;left:54px;top:215px" width="16" height="14" viewBox="0 0 16 14"><defs><linearGradient id="fg" x1="0" y1="0" x2="1" y2="1"><stop offset="0" stop-color="#fdf2a0"/><stop offset="1" stop-color="#f2c27a"/></linearGradient></defs><path d="M0.5 12.5 V2.5 Q0.5 0.5 2.5 0.5 H5.5 L7 2.5 H13.5 V12.5Z" fill="url(#fg)" stroke="#a8984a" stroke-width="1"/><path d="M14.2 2.5 V13.3 H1" stroke="#111" stroke-width="1.5" fill="none"/></svg>
<div class="t" style="left:76px;top:214.7px;font-size:13.8px;color:#000;transform:scaleX(0.9048);transform-origin:0 0;">05.10.2017, Чт</div>
<svg style="position:absolute;left:43px;top:241px" width="10" height="2"><path d="M1 0.5 H10" stroke="#808080" stroke-dasharray="1 1"/></svg>
<svg style="position:absolute;left:54px;top:233px" width="16" height="14" viewBox="0 0 16 14"><defs><linearGradient id="fg" x1="0" y1="0" x2="1" y2="1"><stop offset="0" stop-color="#fdf2a0"/><stop offset="1" stop-color="#f2c27a"/></linearGradient></defs><path d="M0.5 12.5 V2.5 Q0.5 0.5 2.5 0.5 H5.5 L7 2.5 H13.5 V12.5Z" fill="url(#fg)" stroke="#a8984a" stroke-width="1"/><path d="M14.2 2.5 V13.3 H1" stroke="#111" stroke-width="1.5" fill="none"/></svg>
<div class="t" style="left:76px;top:232.7px;font-size:13.8px;color:#8b1c1c;transform:scaleX(0.9048);transform-origin:0 0;">07.10.2017, Сб</div>
<svg style="position:absolute;left:43px;top:259px" width="10" height="2"><path d="M1 0.5 H10" stroke="#808080" stroke-dasharray="1 1"/></svg>
<svg style="position:absolute;left:54px;top:251px" width="16" height="14" viewBox="0 0 16 14"><defs><linearGradient id="fg" x1="0" y1="0" x2="1" y2="1"><stop offset="0" stop-color="#fdf2a0"/><stop offset="1" stop-color="#f2c27a"/></linearGradient></defs><path d="M0.5 12.5 V2.5 Q0.5 0.5 2.5 0.5 H5.5 L7 2.5 H13.5 V12.5Z" fill="url(#fg)" stroke="#a8984a" stroke-width="1"/><path d="M14.2 2.5 V13.3 H1" stroke="#111" stroke-width="1.5" fill="none"/></svg>
<div class="t" style="left:76px;top:250.7px;font-size:13.8px;color:#000;transform:scaleX(0.9048);transform-origin:0 0;">10.10.2017, Вт</div>
<svg style="position:absolute;left:43px;top:277px" width="10" height="2"><path d="M1 0.5 H10" stroke="#808080" stroke-dasharray="1 1"/></svg>
<svg style="position:absolute;left:54px;top:269px" width="16" height="14" viewBox="0 0 16 14"><defs><linearGradient id="fg" x1="0" y1="0" x2="1" y2="1"><stop offset="0" stop-color="#fdf2a0"/><stop offset="1" stop-color="#f2c27a"/></linearGradient></defs><path d="M0.5 12.5 V2.5 Q0.5 0.5 2.5 0.5 H5.5 L7 2.5 H13.5 V12.5Z" fill="url(#fg)" stroke="#a8984a" stroke-width="1"/><path d="M14.2 2.5 V13.3 H1" stroke="#111" stroke-width="1.5" fill="none"/></svg>
<div class="t" style="left:76px;top:268.7px;font-size:13.8px;color:#000;transform:scaleX(0.9048);transform-origin:0 0;">13.10.2017, Пт</div>
<svg style="position:absolute;left:43px;top:295px" width="10" height="2"><path d="M1 0.5 H10" stroke="#808080" stroke-dasharray="1 1"/></svg>
<svg style="position:absolute;left:54px;top:287px" width="16" height="14" viewBox="0 0 16 14"><defs><linearGradient id="fg" x1="0" y1="0" x2="1" y2="1"><stop offset="0" stop-color="#fdf2a0"/><stop offset="1" stop-color="#f2c27a"/></linearGradient></defs><path d="M0.5 12.5 V2.5 Q0.5 0.5 2.5 0.5 H5.5 L7 2.5 H13.5 V12.5Z" fill="url(#fg)" stroke="#a8984a" stroke-width="1"/><path d="M14.2 2.5 V13.3 H1" stroke="#111" stroke-width="1.5" fill="none"/></svg>
<div class="t" style="left:76px;top:286.7px;font-size:13.8px;color:#8b1c1c;transform:scaleX(0.9048);transform-origin:0 0;">14.10.2017, Сб</div>
<svg style="position:absolute;left:43px;top:313px" width="10" height="2"><path d="M1 0.5 H10" stroke="#808080" stroke-dasharray="1 1"/></svg>
<svg style="position:absolute;left:54px;top:305px" width="16" height="14" viewBox="0 0 16 14"><defs><linearGradient id="fg" x1="0" y1="0" x2="1" y2="1"><stop offset="0" stop-color="#fdf2a0"/><stop offset="1" stop-color="#f2c27a"/></linearGradient></defs><path d="M0.5 12.5 V2.5 Q0.5 0.5 2.5 0.5 H5.5 L7 2.5 H13.5 V12.5Z" fill="url(#fg)" stroke="#a8984a" stroke-width="1"/><path d="M14.2 2.5 V13.3 H1" stroke="#111" stroke-width="1.5" fill="none"/></svg>
<div class="t" style="left:76px;top:304.7px;font-size:13.8px;color:#8b1c1c;transform:scaleX(0.9048);transform-origin:0 0;">15.10.2017, Вс</div>
<svg style="position:absolute;left:43px;top:331px" width="10" height="2"><path d="M1 0.5 H10" stroke="#808080" stroke-dasharray="1 1"/></svg>
<svg style="position:absolute;left:54px;top:323px" width="16" height="14" viewBox="0 0 16 14"><defs><linearGradient id="fg" x1="0" y1="0" x2="1" y2="1"><stop offset="0" stop-color="#fdf2a0"/><stop offset="1" stop-color="#f2c27a"/></linearGradient></defs><path d="M0.5 12.5 V2.5 Q0.5 0.5 2.5 0.5 H5.5 L7 2.5 H13.5 V12.5Z" fill="url(#fg)" stroke="#a8984a" stroke-width="1"/><path d="M14.2 2.5 V13.3 H1" stroke="#111" stroke-width="1.5" fill="none"/></svg>
<div class="t" style="left:76px;top:322.7px;font-size:13.8px;color:#000;transform:scaleX(0.9048);transform-origin:0 0;">17.10.2017, Вт</div>
<svg style="position:absolute;left:43px;top:349px" width="10" height="2"><path d="M1 0.5 H10" stroke="#808080" stroke-dasharray="1 1"/></svg>
<svg style="position:absolute;left:54px;top:341px" width="16" height="14" viewBox="0 0 16 14"><defs><linearGradient id="fg" x1="0" y1="0" x2="1" y2="1"><stop offset="0" stop-color="#fdf2a0"/><stop offset="1" stop-color="#f2c27a"/></linearGradient></defs><path d="M0.5 12.5 V2.5 Q0.5 0.5 2.5 0.5 H5.5 L7 2.5 H13.5 V12.5Z" fill="url(#fg)" stroke="#a8984a" stroke-width="1"/><path d="M14.2 2.5 V13.3 H1" stroke="#111" stroke-width="1.5" fill="none"/></svg>
<div class="t" style="left:76px;top:340.7px;font-size:13.8px;color:#000;transform:scaleX(0.9048);transform-origin:0 0;">18.10.2017, Ср</div>
<svg style="position:absolute;left:43px;top:367px" width="10" height="2"><path d="M1 0.5 H10" stroke="#808080" stroke-dasharray="1 1"/></svg>
<svg style="position:absolute;left:54px;top:359px" width="16" height="14" viewBox="0 0 16 14"><defs><linearGradient id="fg" x1="0" y1="0" x2="1" y2="1"><stop offset="0" stop-color="#fdf2a0"/><stop offset="1" stop-color="#f2c27a"/></linearGradient></defs><path d="M0.5 12.5 V2.5 Q0.5 0.5 2.5 0.5 H5.5 L7 2.5 H13.5 V12.5Z" fill="url(#fg)" stroke="#a8984a" stroke-width="1"/><path d="M14.2 2.5 V13.3 H1" stroke="#111" stroke-width="1.5" fill="none"/></svg>
<div class="t" style="left:76px;top:358.7px;font-size:13.8px;color:#000;transform:scaleX(0.9048);transform-origin:0 0;">24.10.2017, Вт</div>
<svg style="position:absolute;left:43px;top:385px" width="10" height="2"><path d="M1 0.5 H10" stroke="#808080" stroke-dasharray="1 1"/></svg>
<svg style="position:absolute;left:54px;top:377px" width="16" height="14" viewBox="0 0 16 14"><defs><linearGradient id="fg" x1="0" y1="0" x2="1" y2="1"><stop offset="0" stop-color="#fdf2a0"/><stop offset="1" stop-color="#f2c27a"/></linearGradient></defs><path d="M0.5 12.5 V2.5 Q0.5 0.5 2.5 0.5 H5.5 L7 2.5 H13.5 V12.5Z" fill="url(#fg)" stroke="#a8984a" stroke-width="1"/><path d="M14.2 2.5 V13.3 H1" stroke="#111" stroke-width="1.5" fill="none"/></svg>
<div class="t" style="left:76px;top:376.7px;font-size:13.8px;color:#000;transform:scaleX(0.9048);transform-origin:0 0;">25.10.2017, Ср</div>
<svg style="position:absolute;left:43px;top:403px" width="10" height="2"><path d="M1 0.5 H10" stroke="#808080" stroke-dasharray="1 1"/></svg>
<svg style="position:absolute;left:54px;top:395px" width="16" height="14" viewBox="0 0 16 14"><defs><linearGradient id="fg" x1="0" y1="0" x2="1" y2="1"><stop offset="0" stop-color="#fdf2a0"/><stop offset="1" stop-color="#f2c27a"/></linearGradient></defs><path d="M0.5 12.5 V2.5 Q0.5 0.5 2.5 0.5 H5.5 L7 2.5 H13.5 V12.5Z" fill="url(#fg)" stroke="#a8984a" stroke-width="1"/><path d="M14.2 2.5 V13.3 H1" stroke="#111" stroke-width="1.5" fill="none"/></svg>
<div class="t" style="left:76px;top:394.7px;font-size:13.8px;color:#000;transform:scaleX(0.9048);transform-origin:0 0;">27.10.2017, Пт</div>
<svg style="position:absolute;left:43px;top:421px" width="10" height="2"><path d="M1 0.5 H10" stroke="#808080" stroke-dasharray="1 1"/></svg>
<svg style="position:absolute;left:54px;top:413px" width="16" height="14" viewBox="0 0 16 14"><defs><linearGradient id="fg" x1="0" y1="0" x2="1" y2="1"><stop offset="0" stop-color="#fdf2a0"/><stop offset="1" stop-color="#f2c27a"/></linearGradient></defs><path d="M0.5 12.5 V2.5 Q0.5 0.5 2.5 0.5 H5.5 L7 2.5 H13.5 V12.5Z" fill="url(#fg)" stroke="#a8984a" stroke-width="1"/><path d="M14.2 2.5 V13.3 H1" stroke="#111" stroke-width="1.5" fill="none"/></svg>
<div class="t" style="left:76px;top:412.7px;font-size:13.8px;color:#8b1c1c;transform:scaleX(0.9048);transform-origin:0 0;">28.10.2017, Сб</div>
<div style="position:absolute;left:184px;top:139px;width:1169px;height:160px;background:#f0f0f0;border-top:2px solid #808080;border-left:2px solid #808080;border-bottom:1px solid #fff;border-right:1px solid #fff;"></div>
<div style="position:absolute;left:186px;top:141px;width:1166px;height:146px;background:#fff;"></div>
<div style="position:absolute;left:204px;top:141px;width:1px;height:146px;background:#d0d0d0;"></div>
<div style="position:absolute;left:204px;top:178px;width:1148px;height:1px;background:#d0d0d0;"></div>
<div style="position:absolute;left:204px;top:196px;width:1148px;height:1px;background:#d0d0d0;"></div>
<div style="position:absolute;left:204px;top:214px;width:1148px;height:1px;background:#d0d0d0;"></div>
<div style="position:absolute;left:204px;top:232px;width:1148px;height:1px;background:#d0d0d0;"></div>
<div style="position:absolute;left:204px;top:250px;width:1148px;height:1px;background:#d0d0d0;"></div>
<div style="position:absolute;left:204px;top:268px;width:1148px;height:1px;background:#d0d0d0;"></div>
<div style="position:absolute;left:204px;top:286px;width:1148px;height:1px;background:#d0d0d0;"></div>
<div style="position:absolute;left:262px;top:160px;width:1px;height:127px;background:#d0d0d0;"></div>
<div style="position:absolute;left:450px;top:160px;width:1px;height:127px;background:#d0d0d0;"></div>
<div style="position:absolute;left:553px;top:160px;width:1px;height:127px;background:#d0d0d0;"></div>
<div class="t" style="left:207px;top:142.4px;font-size:13.5px;color:#000;">Включ...</div>
<div class="t" style="left:265px;top:142.4px;font-size:13.5px;color:#000;">Поле</div>
<div class="t" style="left:453px;top:142.0px;font-size:14.2px;color:#000;">Условие</div>
<div class="t" style="left:556px;top:142.0px;font-size:14.2px;color:#000;">Значение</div>
<svg style="position:absolute;left:226px;top:163px" width="13" height="13" viewBox="0 0 13 13"><rect x="0.5" y="0.5" width="12" height="12" fill="#fff" stroke="#333"/></svg>
<div class="t" style="left:265px;top:160.6px;font-size:14px;color:#a0a0a0;">Пациент</div>
<div class="t" style="left:453px;top:160.6px;font-size:14px;color:#a0a0a0;">Содержит</div>
<div class="t" style="left:556px;top:160.6px;font-size:14px;color:#a0a0a0;">Терещенко</div>
<svg style="position:absolute;left:226px;top:181px" width="13" height="13" viewBox="0 0 13 13"><rect x="0.5" y="0.5" width="12" height="12" fill="#fff" stroke="#333"/></svg>
<div class="t" style="left:265px;top:178.6px;font-size:14px;color:#a0a0a0;">Услуга</div>
<div class="t" style="left:453px;top:178.6px;font-size:14px;color:#a0a0a0;">=</div>
<div class="t" style="left:556px;top:178.6px;font-size:14px;color:#a0a0a0;">Консультация</div>
<svg style="position:absolute;left:226px;top:199px" width="13" height="13" viewBox="0 0 13 13"><rect x="0.5" y="0.5" width="12" height="12" fill="#fff" stroke="#333"/></svg>
<div class="t" style="left:265px;top:196.6px;font-size:14px;color:#a0a0a0;">Дата приема</div>
<div class="t" style="left:453px;top:196.6px;font-size:14px;color:#a0a0a0;">>=</div>
<div class="t" style="left:556px;top:196.6px;font-size:14px;color:#a0a0a0;">30.10.2017</div>
<svg style="position:absolute;left:226px;top:217px" width="13" height="13" viewBox="0 0 13 13"><rect x="0.5" y="0.5" width="12" height="12" fill="#fff" stroke="#333"/><path d="M3 6.5 L5.5 9 L10 3.5" stroke="#333" stroke-width="1.2" fill="none"/></svg>
<div class="t" style="left:265px;top:214.6px;font-size:14px;color:#000;">Дата приема</div>
<div class="t" style="left:453px;top:214.6px;font-size:14px;color:#000;">=</div>
<div class="t" style="left:556px;top:214.6px;font-size:14px;color:#000;">01.10.2017</div>
<svg style="position:absolute;left:226px;top:235px" width="13" height="13" viewBox="0 0 13 13"><rect x="0.5" y="0.5" width="12" height="12" fill="#fff" stroke="#333"/></svg>
<div class="t" style="left:265px;top:232.6px;font-size:14px;color:#a0a0a0;">Неявка</div>
<div class="t" style="left:453px;top:232.6px;font-size:14px;color:#a0a0a0;">=</div>
<div class="t" style="left:556px;top:232.6px;font-size:14px;color:#a0a0a0;">Нет</div>
<svg style="position:absolute;left:226px;top:253px" width="13" height="13" viewBox="0 0 13 13"><rect x="0.5" y="0.5" width="12" height="12" fill="#fff" stroke="#333"/></svg>
<div class="t" style="left:265px;top:250.6px;font-size:14px;color:#a0a0a0;">Состояние</div>
<div class="t" style="left:453px;top:250.6px;font-size:14px;color:#a0a0a0;">Содержит</div>
<div class="t" style="left:556px;top:250.6px;font-size:14px;color:#a0a0a0;">не приедут</div>
<svg style="position:absolute;left:226px;top:271px" width="13" height="13" viewBox="0 0 13 13"><rect x="0.5" y="0.5" width="12" height="12" fill="#fff" stroke="#333"/></svg>
<svg style="position:absolute;left:193px;top:218px" width="7" height="11"><path d="M0 0 L6 5.5 L0 11Z" fill="#000"/></svg>
<svg style="position:absolute;left:191px;top:273px" width="9" height="9"><path d="M4.5 0 V9 M0 4.5 H9 M1.2 1.2 L7.8 7.8 M7.8 1.2 L1.2 7.8" stroke="#000" stroke-width="1.2"/></svg>
<div style="position:absolute;left:433px;top:215px;width:17px;height:17px;background:#e5e5e5;border:1px solid #adadad;"></div>
<svg style="position:absolute;left:437px;top:220px" width="9" height="6"><path d="M0.5 0.5 L4.5 4.5 L8.5 0.5" stroke="#444" fill="none"/></svg>
<div style="position:absolute;left:184px;top:306px;width:1169px;height:18px;border-top:1px solid #a0a0a0;border-left:1px solid #a0a0a0;border-bottom:1px solid #fff;border-right:1px solid #fff;background:#f0f0f0;"></div>
<svg style="position:absolute;left:191px;top:310px" width="10" height="10"><rect x="0.5" y="0.5" width="9" height="9" fill="#dce8f8" stroke="#5a80b8"/><rect x="1" y="1" width="8" height="2" fill="#6a98d8"/><path d="M2 5.5 H4 M6 5.5 H8 M2 7.5 H4 M6 7.5 H8" stroke="#7a9ac8"/></svg>
<div class="t" style="left:208px;top:308.5px;font-size:11.7px;color:#000;font-weight:bold;">Дельфинотерапия</div>
<div class="t" style="left:419px;top:308.9px;font-size:11px;color:#8b4513;">Предварительная запись на прием</div>
<div class="t" style="right:16px;top:308.8px;font-size:11.1px;color:#14145a;">1/11 (отфильтровано) всего 78</div>
<div style="position:absolute;left:184px;top:327px;width:1170px;height:367px;background:#f0f0f0;border-top:2px solid #808080;border-left:2px solid #808080;border-bottom:1px solid #fff;border-right:1px solid #fff;"></div>
<div style="position:absolute;left:186px;top:329px;width:1166px;height:19px;background:#fff;"></div>
<div class="t" style="left:204px;top:329.1px;width:29px;text-align:right;overflow:hidden;font-size:14px;color:#000">ID</div>
<svg style="position:absolute;left:235px;top:334px" width="8" height="8"><path d="M0.5 0.5 H7.5 L4 7.5Z" fill="#c8c8c8" stroke="#9a9a9a"/></svg>
<div class="t" style="left:247px;top:329.1px;width:100px;text-align:right;overflow:hidden;font-size:14px;color:#7a1818">Дата приема</div>
<div class="t" style="left:350px;top:329.1px;width:57px;text-align:right;overflow:hidden;font-size:14px;color:#000">Время</div>
<div class="t" style="left:413px;top:329.1px;width:72px;overflow:hidden;font-size:14px;color:#000">Пациент</div>
<div class="t" style="left:488px;top:329.1px;width:16px;overflow:hidden;font-size:14px;color:#000">E.</div>
<div class="t" style="left:507px;top:329.1px;width:7px;overflow:hidden;font-size:14px;color:#000">I</div>
<div class="t" style="left:517px;top:329.1px;width:12px;overflow:hidden;font-size:14px;color:#000">Д</div>
<div class="t" style="left:532px;top:329.1px;width:73px;overflow:hidden;font-size:14px;color:#000">Возраст</div>
<div class="t" style="left:608px;top:329.1px;width:52px;overflow:hidden;font-size:14px;color:#000">Повт...</div>
<div class="t" style="left:663px;top:329.1px;width:101px;overflow:hidden;font-size:14px;color:#000">Услуга</div>
<div class="t" style="left:767px;top:329.1px;width:100px;overflow:hidden;font-size:14px;color:#000">№Бассейна</div>
<div class="t" style="left:867px;top:329.1px;width:88px;text-align:right;overflow:hidden;font-size:14px;color:#000">Кол-во зан...</div>
<div class="t" style="left:958px;top:329.1px;width:79px;text-align:center;overflow:hidden;font-size:14px;color:#000">Оплачено</div>
<div class="t" style="left:1037px;top:329.1px;width:55px;text-align:center;overflow:hidden;font-size:14px;color:#000">Неявка</div>
<div class="t" style="left:1095px;top:329.1px;width:197px;overflow:hidden;font-size:14px;color:#000">Состояние</div>
<div class="t" style="left:1295px;top:329.1px;width:57px;overflow:hidden;font-size:14px;color:#000">Заметки</div>
<div style="position:absolute;left:186px;top:347px;width:18px;height:20px;background:#fff;"></div>
<div style="position:absolute;left:204px;top:348px;width:43px;height:20px;background:#cce4f7;"></div>
<div style="position:absolute;left:204px;top:367px;width:43px;height:1px;background:rgba(150,150,150,0.6);"></div>
<div style="position:absolute;left:246px;top:348px;width:1px;height:20px;background:rgba(150,150,150,0.6);"></div>
<div style="position:absolute;left:204px;top:348px;width:1px;height:20px;background:rgba(150,150,150,0.6);"></div>
<div class="t" style="left:204px;top:348.8px;width:39px;text-align:right;font-size:12.5px;color:#000">34073</div>
<div style="position:absolute;left:247px;top:348px;width:103px;height:20px;background:#fff;"></div>
<div style="position:absolute;left:349px;top:348px;width:1px;height:20px;background:rgba(150,150,150,0.6);"></div>
<div class="t" style="left:247px;top:348.8px;width:99px;text-align:right;font-size:12.5px;color:#000">01.10.2017, Вс</div>
<div style="position:absolute;left:350px;top:348px;width:60px;height:20px;background:#cce4f7;"></div>
<div style="position:absolute;left:350px;top:367px;width:60px;height:1px;background:rgba(150,150,150,0.6);"></div>
<div style="position:absolute;left:409px;top:348px;width:1px;height:20px;background:rgba(150,150,150,0.6);"></div>
<div style="position:absolute;left:410px;top:348px;width:75px;height:20px;background:#cce4f7;"></div>
<div style="position:absolute;left:410px;top:367px;width:75px;height:1px;background:rgba(150,150,150,0.6);"></div>
<div style="position:absolute;left:484px;top:348px;width:1px;height:20px;background:rgba(150,150,150,0.6);"></div>
<div class="t" style="left:413px;top:347.6px;width:71px;overflow:hidden;font-size:14.3px;color:#000">Кайдалов Илья</div>
<div style="position:absolute;left:485px;top:348px;width:19px;height:20px;background:#cce4f7;"></div>
<div style="position:absolute;left:485px;top:367px;width:19px;height:1px;background:rgba(150,150,150,0.6);"></div>
<div style="position:absolute;left:503px;top:348px;width:1px;height:20px;background:rgba(150,150,150,0.6);"></div>
<div class="t" style="left:488px;top:347.6px;width:15px;overflow:hidden;font-size:14.3px;color:#000">istok</div>
<div style="position:absolute;left:504px;top:348px;width:10px;height:20px;background:#cce4f7;"></div>
<div style="position:absolute;left:504px;top:367px;width:10px;height:1px;background:rgba(150,150,150,0.6);"></div>
<div style="position:absolute;left:513px;top:348px;width:1px;height:20px;background:rgba(150,150,150,0.6);"></div>
<div class="t" style="left:507px;top:347.6px;width:6px;overflow:hidden;font-size:14.3px;color:#000">Иван</div>
<div style="position:absolute;left:514px;top:348px;width:15px;height:20px;background:#cce4f7;"></div>
<div style="position:absolute;left:514px;top:367px;width:15px;height:1px;background:rgba(150,150,150,0.6);"></div>
<div style="position:absolute;left:528px;top:348px;width:1px;height:20px;background:rgba(150,150,150,0.6);"></div>
<div class="t" style="left:517px;top:347.6px;width:11px;overflow:hidden;font-size:14.3px;color:#000">С</div>
<div style="position:absolute;left:529px;top:348px;width:76px;height:20px;background:#cce4f7;"></div>
<div style="position:absolute;left:529px;top:367px;width:76px;height:1px;background:rgba(150,150,150,0.6);"></div>
<div style="position:absolute;left:604px;top:348px;width:1px;height:20px;background:rgba(150,150,150,0.6);"></div>
<div class="t" style="left:532px;top:347.6px;width:72px;overflow:hidden;font-size:14.3px;color:#000">4</div>
<div style="position:absolute;left:605px;top:348px;width:55px;height:20px;background:#cce4f7;"></div>
<div style="position:absolute;left:605px;top:367px;width:55px;height:1px;background:rgba(150,150,150,0.6);"></div>
<div style="position:absolute;left:659px;top:348px;width:1px;height:20px;background:rgba(150,150,150,0.6);"></div>
<div class="t" style="left:608px;top:347.6px;width:51px;overflow:hidden;font-size:14.3px;color:#000">первич</div>
<div style="position:absolute;left:660px;top:348px;width:104px;height:20px;background:#ff80ff;"></div>
<div style="position:absolute;left:660px;top:367px;width:104px;height:1px;background:rgba(150,150,150,0.6);"></div>
<div style="position:absolute;left:763px;top:348px;width:1px;height:20px;background:rgba(150,150,150,0.6);"></div>
<div class="t" style="left:663px;top:347.6px;width:100px;overflow:hidden;font-size:14.3px;color:#000">Консультация</div>
<div style="position:absolute;left:764px;top:348px;width:103px;height:20px;background:#ffff00;"></div>
<div style="position:absolute;left:764px;top:367px;width:103px;height:1px;background:rgba(150,150,150,0.6);"></div>
<div style="position:absolute;left:866px;top:348px;width:1px;height:20px;background:rgba(150,150,150,0.6);"></div>
<div class="t" style="left:767px;top:347.6px;width:99px;overflow:hidden;font-size:14.3px;color:#000">Инд.Занятие</div>
<div style="position:absolute;left:867px;top:348px;width:91px;height:20px;background:#cce4f7;"></div>
<div style="position:absolute;left:867px;top:367px;width:91px;height:1px;background:rgba(150,150,150,0.6);"></div>
<div style="position:absolute;left:957px;top:348px;width:1px;height:20px;background:rgba(150,150,150,0.6);"></div>
<div class="t" style="left:867px;top:347.7px;width:87px;text-align:right;font-size:14.3px;color:#000">1</div>
<div style="position:absolute;left:958px;top:348px;width:79px;height:20px;background:#cce4f7;"></div>
<div style="position:absolute;left:958px;top:367px;width:79px;height:1px;background:rgba(150,150,150,0.6);"></div>
<div style="position:absolute;left:1036px;top:348px;width:1px;height:20px;background:rgba(150,150,150,0.6);"></div>
<svg style="position:absolute;left:991px;top:351px" width="13" height="13" viewBox="0 0 13 13"><rect x="0.5" y="0.5" width="12" height="12" fill="#fff" stroke="#333"/></svg>
<div style="position:absolute;left:1037px;top:348px;width:55px;height:20px;background:#cce4f7;"></div>
<div style="position:absolute;left:1037px;top:367px;width:55px;height:1px;background:rgba(150,150,150,0.6);"></div>
<div style="position:absolute;left:1091px;top:348px;width:1px;height:20px;background:rgba(150,150,150,0.6);"></div>
<svg style="position:absolute;left:1058px;top:351px" width="13" height="13" viewBox="0 0 13 13"><rect x="0.5" y="0.5" width="12" height="12" fill="#fff" stroke="#333"/></svg>
<div style="position:absolute;left:1092px;top:348px;width:200px;height:20px;background:#cce4f7;"></div>
<div style="position:absolute;left:1092px;top:367px;width:200px;height:1px;background:rgba(150,150,150,0.6);"></div>
<div style="position:absolute;left:1291px;top:348px;width:1px;height:20px;background:rgba(150,150,150,0.6);"></div>
<div style="position:absolute;left:1292px;top:348px;width:60px;height:20px;background:#cce4f7;"></div>
<div style="position:absolute;left:1292px;top:367px;width:60px;height:1px;background:rgba(150,150,150,0.6);"></div>
<div style="position:absolute;left:1351px;top:348px;width:1px;height:20px;background:rgba(150,150,150,0.6);"></div>
<div class="t" style="left:1295px;top:348.0px;width:57px;overflow:hidden;font-size:13.6px;color:#000">сч1074от</div>
<div style="position:absolute;left:186px;top:367px;width:18px;height:20px;background:#fff;"></div>
<div style="position:absolute;left:204px;top:368px;width:43px;height:20px;background:#f0f0f0;"></div>
<div style="position:absolute;left:204px;top:387px;width:43px;height:1px;background:rgba(150,150,150,0.6);"></div>
<div style="position:absolute;left:246px;top:368px;width:1px;height:20px;background:rgba(150,150,150,0.6);"></div>
<div style="position:absolute;left:204px;top:368px;width:1px;height:20px;background:rgba(150,150,150,0.6);"></div>
<div class="t" style="left:204px;top:368.8px;width:39px;text-align:right;font-size:12.5px;color:#a0a0a0">33805</div>
<div style="position:absolute;left:247px;top:368px;width:103px;height:20px;background:#fff;"></div>
<div style="position:absolute;left:349px;top:368px;width:1px;height:20px;background:rgba(150,150,150,0.6);"></div>
<div style="position:absolute;left:350px;top:368px;width:60px;height:20px;background:#fff;"></div>
<div style="position:absolute;left:350px;top:387px;width:60px;height:1px;background:rgba(150,150,150,0.6);"></div>
<div style="position:absolute;left:409px;top:368px;width:1px;height:20px;background:rgba(150,150,150,0.6);"></div>
<div style="position:absolute;left:410px;top:368px;width:75px;height:20px;background:#fff;"></div>
<div style="position:absolute;left:410px;top:387px;width:75px;height:1px;background:rgba(150,150,150,0.6);"></div>
<div style="position:absolute;left:484px;top:368px;width:1px;height:20px;background:rgba(150,150,150,0.6);"></div>
<div class="t" style="left:413px;top:367.6px;width:71px;overflow:hidden;font-size:14.3px;color:#000">Савелков Иван</div>
<div style="position:absolute;left:485px;top:368px;width:19px;height:20px;background:#f0f0f0;"></div>
<div style="position:absolute;left:485px;top:387px;width:19px;height:1px;background:rgba(150,150,150,0.6);"></div>
<div style="position:absolute;left:503px;top:368px;width:1px;height:20px;background:rgba(150,150,150,0.6);"></div>
<div class="t" style="left:488px;top:367.6px;width:15px;overflow:hidden;font-size:14.3px;color:#a0a0a0">sasha</div>
<div style="position:absolute;left:504px;top:368px;width:10px;height:20px;background:#f0f0f0;"></div>
<div style="position:absolute;left:504px;top:387px;width:10px;height:1px;background:rgba(150,150,150,0.6);"></div>
<div style="position:absolute;left:513px;top:368px;width:1px;height:20px;background:rgba(150,150,150,0.6);"></div>
<div class="t" style="left:507px;top:367.6px;width:6px;overflow:hidden;font-size:14.3px;color:#a0a0a0">Иван</div>
<div style="position:absolute;left:514px;top:368px;width:15px;height:20px;background:#f0f0f0;"></div>
<div style="position:absolute;left:514px;top:387px;width:15px;height:1px;background:rgba(150,150,150,0.6);"></div>
<div style="position:absolute;left:528px;top:368px;width:1px;height:20px;background:rgba(150,150,150,0.6);"></div>
<div class="t" style="left:517px;top:367.6px;width:11px;overflow:hidden;font-size:14.3px;color:#a0a0a0">С</div>
<div style="position:absolute;left:529px;top:368px;width:76px;height:20px;background:#f0f0f0;"></div>
<div style="position:absolute;left:529px;top:387px;width:76px;height:1px;background:rgba(150,150,150,0.6);"></div>
<div style="position:absolute;left:604px;top:368px;width:1px;height:20px;background:rgba(150,150,150,0.6);"></div>
<div class="t" style="left:532px;top:367.6px;width:72px;overflow:hidden;font-size:14.3px;color:#a0a0a0">5</div>
<div style="position:absolute;left:605px;top:368px;width:55px;height:20px;background:#f0f0f0;"></div>
<div style="position:absolute;left:605px;top:387px;width:55px;height:1px;background:rgba(150,150,150,0.6);"></div>
<div style="position:absolute;left:659px;top:368px;width:1px;height:20px;background:rgba(150,150,150,0.6);"></div>
<div class="t" style="left:608px;top:367.6px;width:51px;overflow:hidden;font-size:14.3px;color:#a0a0a0">первич</div>
<div style="position:absolute;left:660px;top:368px;width:104px;height:20px;background:#ff80ff;"></div>
<div style="position:absolute;left:660px;top:387px;width:104px;height:1px;background:rgba(150,150,150,0.6);"></div>
<div style="position:absolute;left:763px;top:368px;width:1px;height:20px;background:rgba(150,150,150,0.6);"></div>
<div class="t" style="left:663px;top:367.6px;width:100px;overflow:hidden;font-size:14.3px;color:#000">Консультация</div>
<div style="position:absolute;left:764px;top:368px;width:103px;height:20px;background:#ffff00;"></div>
<div style="position:absolute;left:764px;top:387px;width:103px;height:1px;background:rgba(150,150,150,0.6);"></div>
<div style="position:absolute;left:866px;top:368px;width:1px;height:20px;background:rgba(150,150,150,0.6);"></div>
<div class="t" style="left:767px;top:367.6px;width:99px;overflow:hidden;font-size:14.3px;color:#000">Инд.Занятие</div>
<div style="position:absolute;left:867px;top:368px;width:91px;height:20px;background:#fff;"></div>
<div style="position:absolute;left:867px;top:387px;width:91px;height:1px;background:rgba(150,150,150,0.6);"></div>
<div style="position:absolute;left:957px;top:368px;width:1px;height:20px;background:rgba(150,150,150,0.6);"></div>
<div style="position:absolute;left:958px;top:368px;width:79px;height:20px;background:#fff;"></div>
<div style="position:absolute;left:958px;top:387px;width:79px;height:1px;background:rgba(150,150,150,0.6);"></div>
<div style="position:absolute;left:1036px;top:368px;width:1px;height:20px;background:rgba(150,150,150,0.6);"></div>
<svg style="position:absolute;left:991px;top:371px" width="13" height="13" viewBox="0 0 13 13"><rect x="0.5" y="0.5" width="12" height="12" fill="#fff" stroke="#333"/></svg>
<div style="position:absolute;left:1037px;top:368px;width:55px;height:20px;background:#fff;"></div>
<div style="position:absolute;left:1037px;top:387px;width:55px;height:1px;background:rgba(150,150,150,0.6);"></div>
<div style="position:absolute;left:1091px;top:368px;width:1px;height:20px;background:rgba(150,150,150,0.6);"></div>
<svg style="position:absolute;left:1058px;top:371px" width="13" height="13" viewBox="0 0 13 13"><rect x="0.5" y="0.5" width="12" height="12" fill="#fff" stroke="#333"/></svg>
<div style="position:absolute;left:1092px;top:368px;width:200px;height:20px;background:#fff;"></div>
<div style="position:absolute;left:1092px;top:387px;width:200px;height:1px;background:rgba(150,150,150,0.6);"></div>
<div style="position:absolute;left:1291px;top:368px;width:1px;height:20px;background:rgba(150,150,150,0.6);"></div>
<div class="t" style="left:1095px;top:367.6px;width:196px;overflow:hidden;font-size:14.3px;color:#000">Будут(31.07)без п/о-категорично</div>
<div style="position:absolute;left:1292px;top:368px;width:60px;height:20px;background:#fff;"></div>
<div style="position:absolute;left:1292px;top:387px;width:60px;height:1px;background:rgba(150,150,150,0.6);"></div>
<div style="position:absolute;left:1351px;top:368px;width:1px;height:20px;background:rgba(150,150,150,0.6);"></div>
<div class="t" style="left:1295px;top:368.0px;width:57px;overflow:hidden;font-size:13.6px;color:#000">сч1019от</div>
<div style="position:absolute;left:186px;top:387px;width:18px;height:20px;background:#fff;"></div>
<div style="position:absolute;left:204px;top:388px;width:43px;height:20px;background:#80ff80;"></div>
<div style="position:absolute;left:204px;top:407px;width:43px;height:1px;background:rgba(150,150,150,0.6);"></div>
<div style="position:absolute;left:246px;top:388px;width:1px;height:20px;background:rgba(150,150,150,0.6);"></div>
<div style="position:absolute;left:204px;top:388px;width:1px;height:20px;background:rgba(150,150,150,0.6);"></div>
<div class="t" style="left:204px;top:388.8px;width:39px;text-align:right;font-size:12.5px;color:#70c070">33177</div>
<div style="position:absolute;left:247px;top:388px;width:103px;height:20px;background:#fff;"></div>
<div style="position:absolute;left:349px;top:388px;width:1px;height:20px;background:rgba(150,150,150,0.6);"></div>
<div style="position:absolute;left:350px;top:388px;width:60px;height:20px;background:#80ff80;"></div>
<div style="position:absolute;left:350px;top:407px;width:60px;height:1px;background:rgba(150,150,150,0.6);"></div>
<div style="position:absolute;left:409px;top:388px;width:1px;height:20px;background:rgba(150,150,150,0.6);"></div>
<div style="position:absolute;left:410px;top:388px;width:75px;height:20px;background:#80ff80;"></div>
<div style="position:absolute;left:410px;top:407px;width:75px;height:1px;background:rgba(150,150,150,0.6);"></div>
<div style="position:absolute;left:484px;top:388px;width:1px;height:20px;background:rgba(150,150,150,0.6);"></div>
<div class="t" style="left:413px;top:387.6px;width:71px;overflow:hidden;font-size:14.3px;color:#000">Гудыма Алиса</div>
<div style="position:absolute;left:485px;top:388px;width:19px;height:20px;background:#80ff80;"></div>
<div style="position:absolute;left:485px;top:407px;width:19px;height:1px;background:rgba(150,150,150,0.6);"></div>
<div style="position:absolute;left:503px;top:388px;width:1px;height:20px;background:rgba(150,150,150,0.6);"></div>
<div class="t" style="left:488px;top:387.6px;width:15px;overflow:hidden;font-size:14.3px;color:#70c070">Gydyma</div>
<div style="position:absolute;left:504px;top:388px;width:10px;height:20px;background:#80ff80;"></div>
<div style="position:absolute;left:504px;top:407px;width:10px;height:1px;background:rgba(150,150,150,0.6);"></div>
<div style="position:absolute;left:513px;top:388px;width:1px;height:20px;background:rgba(150,150,150,0.6);"></div>
<div class="t" style="left:507px;top:387.6px;width:6px;overflow:hidden;font-size:14.3px;color:#70c070">Иван</div>
<div style="position:absolute;left:514px;top:388px;width:15px;height:20px;background:#80ff80;"></div>
<div style="position:absolute;left:514px;top:407px;width:15px;height:1px;background:rgba(150,150,150,0.6);"></div>
<div style="position:absolute;left:528px;top:388px;width:1px;height:20px;background:rgba(150,150,150,0.6);"></div>
<div class="t" style="left:517px;top:387.6px;width:11px;overflow:hidden;font-size:14.3px;color:#70c070">Д</div>
<div style="position:absolute;left:529px;top:388px;width:76px;height:20px;background:#80ff80;"></div>
<div style="position:absolute;left:529px;top:407px;width:76px;height:1px;background:rgba(150,150,150,0.6);"></div>
<div style="position:absolute;left:604px;top:388px;width:1px;height:20px;background:rgba(150,150,150,0.6);"></div>
<div class="t" style="left:532px;top:387.6px;width:72px;overflow:hidden;font-size:14.3px;color:#70c070">5</div>
<div style="position:absolute;left:605px;top:388px;width:55px;height:20px;background:#80ff80;"></div>
<div style="position:absolute;left:605px;top:407px;width:55px;height:1px;background:rgba(150,150,150,0.6);"></div>
<div style="position:absolute;left:659px;top:388px;width:1px;height:20px;background:rgba(150,150,150,0.6);"></div>
<div class="t" style="left:608px;top:387.6px;width:51px;overflow:hidden;font-size:14.3px;color:#70c070">повторный</div>
<div style="position:absolute;left:660px;top:388px;width:104px;height:20px;background:#ff80ff;"></div>
<div style="position:absolute;left:660px;top:407px;width:104px;height:1px;background:rgba(150,150,150,0.6);"></div>
<div style="position:absolute;left:763px;top:388px;width:1px;height:20px;background:rgba(150,150,150,0.6);"></div>
<div class="t" style="left:663px;top:387.6px;width:100px;overflow:hidden;font-size:14.3px;color:#000">Консультация</div>
<div style="position:absolute;left:764px;top:388px;width:103px;height:20px;background:#ffff00;"></div>
<div style="position:absolute;left:764px;top:407px;width:103px;height:1px;background:rgba(150,150,150,0.6);"></div>
<div style="position:absolute;left:866px;top:388px;width:1px;height:20px;background:rgba(150,150,150,0.6);"></div>
<div class="t" style="left:767px;top:387.6px;width:99px;overflow:hidden;font-size:14.3px;color:#000">Инд.Занятие</div>
<div style="position:absolute;left:867px;top:388px;width:91px;height:20px;background:#80ff80;"></div>
<div style="position:absolute;left:867px;top:407px;width:91px;height:1px;background:rgba(150,150,150,0.6);"></div>
<div style="position:absolute;left:957px;top:388px;width:1px;height:20px;background:rgba(150,150,150,0.6);"></div>
<div style="position:absolute;left:958px;top:388px;width:79px;height:20px;background:#80ff80;"></div>
<div style="position:absolute;left:958px;top:407px;width:79px;height:1px;background:rgba(150,150,150,0.6);"></div>
<div style="position:absolute;left:1036px;top:388px;width:1px;height:20px;background:rgba(150,150,150,0.6);"></div>
<svg style="position:absolute;left:991px;top:391px" width="13" height="13" viewBox="0 0 13 13"><rect x="0.5" y="0.5" width="12" height="12" fill="#fff" stroke="#333"/><path d="M3 6.5 L5.5 9 L10 3.5" stroke="#333" stroke-width="1.2" fill="none"/></svg>
<div style="position:absolute;left:1037px;top:388px;width:55px;height:20px;background:#80ff80;"></div>
<div style="position:absolute;left:1037px;top:407px;width:55px;height:1px;background:rgba(150,150,150,0.6);"></div>
<div style="position:absolute;left:1091px;top:388px;width:1px;height:20px;background:rgba(150,150,150,0.6);"></div>
<svg style="position:absolute;left:1058px;top:391px" width="13" height="13" viewBox="0 0 13 13"><rect x="0.5" y="0.5" width="12" height="12" fill="#fff" stroke="#333"/></svg>
<div style="position:absolute;left:1092px;top:388px;width:200px;height:20px;background:#80ff80;"></div>
<div style="position:absolute;left:1092px;top:407px;width:200px;height:1px;background:rgba(150,150,150,0.6);"></div>
<div style="position:absolute;left:1291px;top:388px;width:1px;height:20px;background:rgba(150,150,150,0.6);"></div>
<div style="position:absolute;left:1292px;top:388px;width:60px;height:20px;background:#80ff80;"></div>
<div style="position:absolute;left:1292px;top:407px;width:60px;height:1px;background:rgba(150,150,150,0.6);"></div>
<div style="position:absolute;left:1351px;top:388px;width:1px;height:20px;background:rgba(150,150,150,0.6);"></div>
<div class="t" style="left:1295px;top:388.0px;width:57px;overflow:hidden;font-size:13.6px;color:#000">сч933от2</div>
<div style="position:absolute;left:186px;top:407px;width:18px;height:20px;background:#fff;"></div>
<div style="position:absolute;left:204px;top:408px;width:43px;height:20px;background:#f0f0f0;"></div>
<div style="position:absolute;left:204px;top:427px;width:43px;height:1px;background:rgba(150,150,150,0.6);"></div>
<div style="position:absolute;left:246px;top:408px;width:1px;height:20px;background:rgba(150,150,150,0.6);"></div>
<div style="position:absolute;left:204px;top:408px;width:1px;height:20px;background:rgba(150,150,150,0.6);"></div>
<div class="t" style="left:204px;top:408.8px;width:39px;text-align:right;font-size:12.5px;color:#a0a0a0">33084</div>
<div style="position:absolute;left:247px;top:408px;width:103px;height:20px;background:#fff;"></div>
<div style="position:absolute;left:349px;top:408px;width:1px;height:20px;background:rgba(150,150,150,0.6);"></div>
<div style="position:absolute;left:350px;top:408px;width:60px;height:20px;background:#fff;"></div>
<div style="position:absolute;left:350px;top:427px;width:60px;height:1px;background:rgba(150,150,150,0.6);"></div>
<div style="position:absolute;left:409px;top:408px;width:1px;height:20px;background:rgba(150,150,150,0.6);"></div>
<div style="position:absolute;left:410px;top:408px;width:75px;height:20px;background:#fff;"></div>
<div style="position:absolute;left:410px;top:427px;width:75px;height:1px;background:rgba(150,150,150,0.6);"></div>
<div style="position:absolute;left:484px;top:408px;width:1px;height:20px;background:rgba(150,150,150,0.6);"></div>
<div class="t" style="left:413px;top:407.6px;width:71px;overflow:hidden;font-size:14.3px;color:#000">Фридрихсен</div>
<div style="position:absolute;left:485px;top:408px;width:19px;height:20px;background:#f0f0f0;"></div>
<div style="position:absolute;left:485px;top:427px;width:19px;height:1px;background:rgba(150,150,150,0.6);"></div>
<div style="position:absolute;left:503px;top:408px;width:1px;height:20px;background:rgba(150,150,150,0.6);"></div>
<div class="t" style="left:488px;top:407.6px;width:15px;overflow:hidden;font-size:14.3px;color:#a0a0a0">imya</div>
<div style="position:absolute;left:504px;top:408px;width:10px;height:20px;background:#f0f0f0;"></div>
<div style="position:absolute;left:504px;top:427px;width:10px;height:1px;background:rgba(150,150,150,0.6);"></div>
<div style="position:absolute;left:513px;top:408px;width:1px;height:20px;background:rgba(150,150,150,0.6);"></div>
<div style="position:absolute;left:514px;top:408px;width:15px;height:20px;background:#f0f0f0;"></div>
<div style="position:absolute;left:514px;top:427px;width:15px;height:1px;background:rgba(150,150,150,0.6);"></div>
<div style="position:absolute;left:528px;top:408px;width:1px;height:20px;background:rgba(150,150,150,0.6);"></div>
<div class="t" style="left:517px;top:407.6px;width:11px;overflow:hidden;font-size:14.3px;color:#a0a0a0">З</div>
<div style="position:absolute;left:529px;top:408px;width:76px;height:20px;background:#f0f0f0;"></div>
<div style="position:absolute;left:529px;top:427px;width:76px;height:1px;background:rgba(150,150,150,0.6);"></div>
<div style="position:absolute;left:604px;top:408px;width:1px;height:20px;background:rgba(150,150,150,0.6);"></div>
<div class="t" style="left:532px;top:407.6px;width:72px;overflow:hidden;font-size:14.3px;color:#a0a0a0">5</div>
<div style="position:absolute;left:605px;top:408px;width:55px;height:20px;background:#f0f0f0;"></div>
<div style="position:absolute;left:605px;top:427px;width:55px;height:1px;background:rgba(150,150,150,0.6);"></div>
<div style="position:absolute;left:659px;top:408px;width:1px;height:20px;background:rgba(150,150,150,0.6);"></div>
<div class="t" style="left:608px;top:407.6px;width:51px;overflow:hidden;font-size:14.3px;color:#a0a0a0">первич</div>
<div style="position:absolute;left:660px;top:408px;width:104px;height:20px;background:#ff80ff;"></div>
<div style="position:absolute;left:660px;top:427px;width:104px;height:1px;background:rgba(150,150,150,0.6);"></div>
<div style="position:absolute;left:763px;top:408px;width:1px;height:20px;background:rgba(150,150,150,0.6);"></div>
<div class="t" style="left:663px;top:407.6px;width:100px;overflow:hidden;font-size:14.3px;color:#000">Консультация</div>
<div style="position:absolute;left:764px;top:408px;width:103px;height:20px;background:#ffff00;"></div>
<div style="position:absolute;left:764px;top:427px;width:103px;height:1px;background:rgba(150,150,150,0.6);"></div>
<div style="position:absolute;left:866px;top:408px;width:1px;height:20px;background:rgba(150,150,150,0.6);"></div>
<div class="t" style="left:767px;top:407.6px;width:99px;overflow:hidden;font-size:14.3px;color:#000">Инд.Занятие</div>
<div style="position:absolute;left:867px;top:408px;width:91px;height:20px;background:#fff;"></div>
<div style="position:absolute;left:867px;top:427px;width:91px;height:1px;background:rgba(150,150,150,0.6);"></div>
<div style="position:absolute;left:957px;top:408px;width:1px;height:20px;background:rgba(150,150,150,0.6);"></div>
<div style="position:absolute;left:958px;top:408px;width:79px;height:20px;background:#fff;"></div>
<div style="position:absolute;left:958px;top:427px;width:79px;height:1px;background:rgba(150,150,150,0.6);"></div>
<div style="position:absolute;left:1036px;top:408px;width:1px;height:20px;background:rgba(150,150,150,0.6);"></div>
<svg style="position:absolute;left:991px;top:411px" width="13" height="13" viewBox="0 0 13 13"><rect x="0.5" y="0.5" width="12" height="12" fill="#fff" stroke="#333"/></svg>
<div style="position:absolute;left:1037px;top:408px;width:55px;height:20px;background:#fff;"></div>
<div style="position:absolute;left:1037px;top:427px;width:55px;height:1px;background:rgba(150,150,150,0.6);"></div>
<div style="position:absolute;left:1091px;top:408px;width:1px;height:20px;background:rgba(150,150,150,0.6);"></div>
<svg style="position:absolute;left:1058px;top:411px" width="13" height="13" viewBox="0 0 13 13"><rect x="0.5" y="0.5" width="12" height="12" fill="#fff" stroke="#333"/></svg>
<div style="position:absolute;left:1092px;top:408px;width:200px;height:20px;background:#fff;"></div>
<div style="position:absolute;left:1092px;top:427px;width:200px;height:1px;background:rgba(150,150,150,0.6);"></div>
<div style="position:absolute;left:1291px;top:408px;width:1px;height:20px;background:rgba(150,150,150,0.6);"></div>
<div class="t" style="left:1095px;top:407.6px;width:196px;overflow:hidden;font-size:14.3px;color:#000">КОН во второй половине дня!!!</div>
<div style="position:absolute;left:1292px;top:408px;width:60px;height:20px;background:#fff;"></div>
<div style="position:absolute;left:1292px;top:427px;width:60px;height:1px;background:rgba(150,150,150,0.6);"></div>
<div style="position:absolute;left:1351px;top:408px;width:1px;height:20px;background:rgba(150,150,150,0.6);"></div>
<div class="t" style="left:1295px;top:408.0px;width:57px;overflow:hidden;font-size:13.6px;color:#000">5 занятий</div>
<div style="position:absolute;left:186px;top:427px;width:18px;height:20px;background:#fff;"></div>
<div style="position:absolute;left:204px;top:428px;width:43px;height:20px;background:#f0f0f0;"></div>
<div style="position:absolute;left:204px;top:447px;width:43px;height:1px;background:rgba(150,150,150,0.6);"></div>
<div style="position:absolute;left:246px;top:428px;width:1px;height:20px;background:rgba(150,150,150,0.6);"></div>
<div style="position:absolute;left:204px;top:428px;width:1px;height:20px;background:rgba(150,150,150,0.6);"></div>
<div class="t" style="left:204px;top:428.8px;width:39px;text-align:right;font-size:12.5px;color:#a0a0a0">33083</div>
<div style="position:absolute;left:247px;top:428px;width:103px;height:20px;background:#fff;"></div>
<div style="position:absolute;left:349px;top:428px;width:1px;height:20px;background:rgba(150,150,150,0.6);"></div>
<div style="position:absolute;left:350px;top:428px;width:60px;height:20px;background:#fff;"></div>
<div style="position:absolute;left:350px;top:447px;width:60px;height:1px;background:rgba(150,150,150,0.6);"></div>
<div style="position:absolute;left:409px;top:428px;width:1px;height:20px;background:rgba(150,150,150,0.6);"></div>
<div style="position:absolute;left:410px;top:428px;width:75px;height:20px;background:#fff;"></div>
<div style="position:absolute;left:410px;top:447px;width:75px;height:1px;background:rgba(150,150,150,0.6);"></div>
<div style="position:absolute;left:484px;top:428px;width:1px;height:20px;background:rgba(150,150,150,0.6);"></div>
<div class="t" style="left:413px;top:427.6px;width:71px;overflow:hidden;font-size:14.3px;color:#000">Фридрихсен</div>
<div style="position:absolute;left:485px;top:428px;width:19px;height:20px;background:#f0f0f0;"></div>
<div style="position:absolute;left:485px;top:447px;width:19px;height:1px;background:rgba(150,150,150,0.6);"></div>
<div style="position:absolute;left:503px;top:428px;width:1px;height:20px;background:rgba(150,150,150,0.6);"></div>
<div class="t" style="left:488px;top:427.6px;width:15px;overflow:hidden;font-size:14.3px;color:#a0a0a0">imya</div>
<div style="position:absolute;left:504px;top:428px;width:10px;height:20px;background:#f0f0f0;"></div>
<div style="position:absolute;left:504px;top:447px;width:10px;height:1px;background:rgba(150,150,150,0.6);"></div>
<div style="position:absolute;left:513px;top:428px;width:1px;height:20px;background:rgba(150,150,150,0.6);"></div>
<div style="position:absolute;left:514px;top:428px;width:15px;height:20px;background:#f0f0f0;"></div>
<div style="position:absolute;left:514px;top:447px;width:15px;height:1px;background:rgba(150,150,150,0.6);"></div>
<div style="position:absolute;left:528px;top:428px;width:1px;height:20px;background:rgba(150,150,150,0.6);"></div>
<div class="t" style="left:517px;top:427.6px;width:11px;overflow:hidden;font-size:14.3px;color:#a0a0a0">Р</div>
<div style="position:absolute;left:529px;top:428px;width:76px;height:20px;background:#f0f0f0;"></div>
<div style="position:absolute;left:529px;top:447px;width:76px;height:1px;background:rgba(150,150,150,0.6);"></div>
<div style="position:absolute;left:604px;top:428px;width:1px;height:20px;background:rgba(150,150,150,0.6);"></div>
<div class="t" style="left:532px;top:427.6px;width:72px;overflow:hidden;font-size:14.3px;color:#a0a0a0">8</div>
<div style="position:absolute;left:605px;top:428px;width:55px;height:20px;background:#f0f0f0;"></div>
<div style="position:absolute;left:605px;top:447px;width:55px;height:1px;background:rgba(150,150,150,0.6);"></div>
<div style="position:absolute;left:659px;top:428px;width:1px;height:20px;background:rgba(150,150,150,0.6);"></div>
<div class="t" style="left:608px;top:427.6px;width:51px;overflow:hidden;font-size:14.3px;color:#a0a0a0">первич</div>
<div style="position:absolute;left:660px;top:428px;width:104px;height:20px;background:#ff80ff;"></div>
<div style="position:absolute;left:660px;top:447px;width:104px;height:1px;background:rgba(150,150,150,0.6);"></div>
<div style="position:absolute;left:763px;top:428px;width:1px;height:20px;background:rgba(150,150,150,0.6);"></div>
<div class="t" style="left:663px;top:427.6px;width:100px;overflow:hidden;font-size:14.3px;color:#000">Консультация</div>
<div style="position:absolute;left:764px;top:428px;width:103px;height:20px;background:#ffff00;"></div>
<div style="position:absolute;left:764px;top:447px;width:103px;height:1px;background:rgba(150,150,150,0.6);"></div>
<div style="position:absolute;left:866px;top:428px;width:1px;height:20px;background:rgba(150,150,150,0.6);"></div>
<div class="t" style="left:767px;top:427.6px;width:99px;overflow:hidden;font-size:14.3px;color:#000">Инд.Занятие</div>
<div style="position:absolute;left:867px;top:428px;width:91px;height:20px;background:#fff;"></div>
<div style="position:absolute;left:867px;top:447px;width:91px;height:1px;background:rgba(150,150,150,0.6);"></div>
<div style="position:absolute;left:957px;top:428px;width:1px;height:20px;background:rgba(150,150,150,0.6);"></div>
<div style="position:absolute;left:958px;top:428px;width:79px;height:20px;background:#fff;"></div>
<div style="position:absolute;left:958px;top:447px;width:79px;height:1px;background:rgba(150,150,150,0.6);"></div>
<div style="position:absolute;left:1036px;top:428px;width:1px;height:20px;background:rgba(150,150,150,0.6);"></div>
<svg style="position:absolute;left:991px;top:431px" width="13" height="13" viewBox="0 0 13 13"><rect x="0.5" y="0.5" width="12" height="12" fill="#fff" stroke="#333"/></svg>
<div style="position:absolute;left:1037px;top:428px;width:55px;height:20px;background:#fff;"></div>
<div style="position:absolute;left:1037px;top:447px;width:55px;height:1px;background:rgba(150,150,150,0.6);"></div>
<div style="position:absolute;left:1091px;top:428px;width:1px;height:20px;background:rgba(150,150,150,0.6);"></div>
<svg style="position:absolute;left:1058px;top:431px" width="13" height="13" viewBox="0 0 13 13"><rect x="0.5" y="0.5" width="12" height="12" fill="#fff" stroke="#333"/></svg>
<div style="position:absolute;left:1092px;top:428px;width:200px;height:20px;background:#fff;"></div>
<div style="position:absolute;left:1092px;top:447px;width:200px;height:1px;background:rgba(150,150,150,0.6);"></div>
<div style="position:absolute;left:1291px;top:428px;width:1px;height:20px;background:rgba(150,150,150,0.6);"></div>
<div class="t" style="left:1095px;top:427.6px;width:196px;overflow:hidden;font-size:14.3px;color:#000">КОН во второй половине дня!</div>
<div style="position:absolute;left:1292px;top:428px;width:60px;height:20px;background:#fff;"></div>
<div style="position:absolute;left:1292px;top:447px;width:60px;height:1px;background:rgba(150,150,150,0.6);"></div>
<div style="position:absolute;left:1351px;top:428px;width:1px;height:20px;background:rgba(150,150,150,0.6);"></div>
<div class="t" style="left:1295px;top:428.0px;width:57px;overflow:hidden;font-size:13.6px;color:#000">Оплата ед</div>
<div style="position:absolute;left:186px;top:447px;width:18px;height:20px;background:#fff;"></div>
<div style="position:absolute;left:204px;top:448px;width:43px;height:20px;background:#80ff80;"></div>
<div style="position:absolute;left:204px;top:467px;width:43px;height:1px;background:rgba(150,150,150,0.6);"></div>
<div style="position:absolute;left:246px;top:448px;width:1px;height:20px;background:rgba(150,150,150,0.6);"></div>
<div style="position:absolute;left:204px;top:448px;width:1px;height:20px;background:rgba(150,150,150,0.6);"></div>
<div class="t" style="left:204px;top:448.8px;width:39px;text-align:right;font-size:12.5px;color:#70c070">32040</div>
<div style="position:absolute;left:247px;top:448px;width:103px;height:20px;background:#fff;"></div>
<div style="position:absolute;left:349px;top:448px;width:1px;height:20px;background:rgba(150,150,150,0.6);"></div>
<div style="position:absolute;left:350px;top:448px;width:60px;height:20px;background:#80ff80;"></div>
<div style="position:absolute;left:350px;top:467px;width:60px;height:1px;background:rgba(150,150,150,0.6);"></div>
<div style="position:absolute;left:409px;top:448px;width:1px;height:20px;background:rgba(150,150,150,0.6);"></div>
<div style="position:absolute;left:410px;top:448px;width:75px;height:20px;background:#80ff80;"></div>
<div style="position:absolute;left:410px;top:467px;width:75px;height:1px;background:rgba(150,150,150,0.6);"></div>
<div style="position:absolute;left:484px;top:448px;width:1px;height:20px;background:rgba(150,150,150,0.6);"></div>
<div class="t" style="left:413px;top:447.6px;width:71px;overflow:hidden;font-size:14.3px;color:#000">Тюленев Максим</div>
<div style="position:absolute;left:485px;top:448px;width:19px;height:20px;background:#80ff80;"></div>
<div style="position:absolute;left:485px;top:467px;width:19px;height:1px;background:rgba(150,150,150,0.6);"></div>
<div style="position:absolute;left:503px;top:448px;width:1px;height:20px;background:rgba(150,150,150,0.6);"></div>
<div class="t" style="left:488px;top:447.6px;width:15px;overflow:hidden;font-size:14.3px;color:#70c070">Sergey</div>
<div style="position:absolute;left:504px;top:448px;width:10px;height:20px;background:#80ff80;"></div>
<div style="position:absolute;left:504px;top:467px;width:10px;height:1px;background:rgba(150,150,150,0.6);"></div>
<div style="position:absolute;left:513px;top:448px;width:1px;height:20px;background:rgba(150,150,150,0.6);"></div>
<div class="t" style="left:507px;top:447.6px;width:6px;overflow:hidden;font-size:14.3px;color:#70c070">Иван</div>
<div style="position:absolute;left:514px;top:448px;width:15px;height:20px;background:#80ff80;"></div>
<div style="position:absolute;left:514px;top:467px;width:15px;height:1px;background:rgba(150,150,150,0.6);"></div>
<div style="position:absolute;left:528px;top:448px;width:1px;height:20px;background:rgba(150,150,150,0.6);"></div>
<div class="t" style="left:517px;top:447.6px;width:11px;overflow:hidden;font-size:14.3px;color:#70c070">С</div>
<div style="position:absolute;left:529px;top:448px;width:76px;height:20px;background:#80ff80;"></div>
<div style="position:absolute;left:529px;top:467px;width:76px;height:1px;background:rgba(150,150,150,0.6);"></div>
<div style="position:absolute;left:604px;top:448px;width:1px;height:20px;background:rgba(150,150,150,0.6);"></div>
<div class="t" style="left:532px;top:447.6px;width:72px;overflow:hidden;font-size:14.3px;color:#70c070">8</div>
<div style="position:absolute;left:605px;top:448px;width:55px;height:20px;background:#80ff80;"></div>
<div style="position:absolute;left:605px;top:467px;width:55px;height:1px;background:rgba(150,150,150,0.6);"></div>
<div style="position:absolute;left:659px;top:448px;width:1px;height:20px;background:rgba(150,150,150,0.6);"></div>
<div class="t" style="left:608px;top:447.6px;width:51px;overflow:hidden;font-size:14.3px;color:#70c070">повторный</div>
<div style="position:absolute;left:660px;top:448px;width:104px;height:20px;background:#ff80ff;"></div>
<div style="position:absolute;left:660px;top:467px;width:104px;height:1px;background:rgba(150,150,150,0.6);"></div>
<div style="position:absolute;left:763px;top:448px;width:1px;height:20px;background:rgba(150,150,150,0.6);"></div>
<div class="t" style="left:663px;top:447.6px;width:100px;overflow:hidden;font-size:14.3px;color:#000">Консультация</div>
<div style="position:absolute;left:764px;top:448px;width:103px;height:20px;background:#ff00ff;"></div>
<div style="position:absolute;left:764px;top:467px;width:103px;height:1px;background:rgba(150,150,150,0.6);"></div>
<div style="position:absolute;left:866px;top:448px;width:1px;height:20px;background:rgba(150,150,150,0.6);"></div>
<div class="t" style="left:767px;top:447.6px;width:99px;overflow:hidden;font-size:14.3px;color:#5a0a7a">Груп.занятие</div>
<div style="position:absolute;left:867px;top:448px;width:91px;height:20px;background:#80ff80;"></div>
<div style="position:absolute;left:867px;top:467px;width:91px;height:1px;background:rgba(150,150,150,0.6);"></div>
<div style="position:absolute;left:957px;top:448px;width:1px;height:20px;background:rgba(150,150,150,0.6);"></div>
<div style="position:absolute;left:958px;top:448px;width:79px;height:20px;background:#80ff80;"></div>
<div style="position:absolute;left:958px;top:467px;width:79px;height:1px;background:rgba(150,150,150,0.6);"></div>
<div style="position:absolute;left:1036px;top:448px;width:1px;height:20px;background:rgba(150,150,150,0.6);"></div>
<svg style="position:absolute;left:991px;top:451px" width="13" height="13" viewBox="0 0 13 13"><rect x="0.5" y="0.5" width="12" height="12" fill="#fff" stroke="#333"/><path d="M3 6.5 L5.5 9 L10 3.5" stroke="#333" stroke-width="1.2" fill="none"/></svg>
<div style="position:absolute;left:1037px;top:448px;width:55px;height:20px;background:#80ff80;"></div>
<div style="position:absolute;left:1037px;top:467px;width:55px;height:1px;background:rgba(150,150,150,0.6);"></div>
<div style="position:absolute;left:1091px;top:448px;width:1px;height:20px;background:rgba(150,150,150,0.6);"></div>
<svg style="position:absolute;left:1058px;top:451px" width="13" height="13" viewBox="0 0 13 13"><rect x="0.5" y="0.5" width="12" height="12" fill="#fff" stroke="#333"/></svg>
<div style="position:absolute;left:1092px;top:448px;width:200px;height:20px;background:#80ff80;"></div>
<div style="position:absolute;left:1092px;top:467px;width:200px;height:1px;background:rgba(150,150,150,0.6);"></div>
<div style="position:absolute;left:1291px;top:448px;width:1px;height:20px;background:rgba(150,150,150,0.6);"></div>
<div class="t" style="left:1095px;top:447.6px;width:196px;overflow:hidden;font-size:14.3px;color:#000">Консульт.просят поставить на</div>
<div style="position:absolute;left:1292px;top:448px;width:60px;height:20px;background:#80ff80;"></div>
<div style="position:absolute;left:1292px;top:467px;width:60px;height:1px;background:rgba(150,150,150,0.6);"></div>
<div style="position:absolute;left:1351px;top:448px;width:1px;height:20px;background:rgba(150,150,150,0.6);"></div>
<div class="t" style="left:1295px;top:448.0px;width:57px;overflow:hidden;font-size:13.6px;color:#000">сч 740 от</div>
<div style="position:absolute;left:186px;top:467px;width:18px;height:20px;background:#fff;"></div>
<div style="position:absolute;left:204px;top:468px;width:43px;height:20px;background:#f0f0f0;"></div>
<div style="position:absolute;left:204px;top:487px;width:43px;height:1px;background:rgba(150,150,150,0.6);"></div>
<div style="position:absolute;left:246px;top:468px;width:1px;height:20px;background:rgba(150,150,150,0.6);"></div>
<div style="position:absolute;left:204px;top:468px;width:1px;height:20px;background:rgba(150,150,150,0.6);"></div>
<div class="t" style="left:204px;top:468.8px;width:39px;text-align:right;font-size:12.5px;color:#a0a0a0">31936</div>
<div style="position:absolute;left:247px;top:468px;width:103px;height:20px;background:#fff;"></div>
<div style="position:absolute;left:349px;top:468px;width:1px;height:20px;background:rgba(150,150,150,0.6);"></div>
<div style="position:absolute;left:350px;top:468px;width:60px;height:20px;background:#fff;"></div>
<div style="position:absolute;left:350px;top:487px;width:60px;height:1px;background:rgba(150,150,150,0.6);"></div>
<div style="position:absolute;left:409px;top:468px;width:1px;height:20px;background:rgba(150,150,150,0.6);"></div>
<div style="position:absolute;left:410px;top:468px;width:75px;height:20px;background:#fff;"></div>
<div style="position:absolute;left:410px;top:487px;width:75px;height:1px;background:rgba(150,150,150,0.6);"></div>
<div style="position:absolute;left:484px;top:468px;width:1px;height:20px;background:rgba(150,150,150,0.6);"></div>
<div class="t" style="left:413px;top:467.6px;width:71px;overflow:hidden;font-size:14.3px;color:#000">Марийченко</div>
<div style="position:absolute;left:485px;top:468px;width:19px;height:20px;background:#f0f0f0;"></div>
<div style="position:absolute;left:485px;top:487px;width:19px;height:1px;background:rgba(150,150,150,0.6);"></div>
<div style="position:absolute;left:503px;top:468px;width:1px;height:20px;background:rgba(150,150,150,0.6);"></div>
<div class="t" style="left:488px;top:467.6px;width:15px;overflow:hidden;font-size:14.3px;color:#a0a0a0">katya</div>
<div style="position:absolute;left:504px;top:468px;width:10px;height:20px;background:#f0f0f0;"></div>
<div style="position:absolute;left:504px;top:487px;width:10px;height:1px;background:rgba(150,150,150,0.6);"></div>
<div style="position:absolute;left:513px;top:468px;width:1px;height:20px;background:rgba(150,150,150,0.6);"></div>
<div class="t" style="left:507px;top:467.6px;width:6px;overflow:hidden;font-size:14.3px;color:#a0a0a0">Иван</div>
<div style="position:absolute;left:514px;top:468px;width:15px;height:20px;background:#f0f0f0;"></div>
<div style="position:absolute;left:514px;top:487px;width:15px;height:1px;background:rgba(150,150,150,0.6);"></div>
<div style="position:absolute;left:528px;top:468px;width:1px;height:20px;background:rgba(150,150,150,0.6);"></div>
<div class="t" style="left:517px;top:467.6px;width:11px;overflow:hidden;font-size:14.3px;color:#a0a0a0">С</div>
<div style="position:absolute;left:529px;top:468px;width:76px;height:20px;background:#f0f0f0;"></div>
<div style="position:absolute;left:529px;top:487px;width:76px;height:1px;background:rgba(150,150,150,0.6);"></div>
<div style="position:absolute;left:604px;top:468px;width:1px;height:20px;background:rgba(150,150,150,0.6);"></div>
<div class="t" style="left:532px;top:467.6px;width:72px;overflow:hidden;font-size:14.3px;color:#a0a0a0">5</div>
<div style="position:absolute;left:605px;top:468px;width:55px;height:20px;background:#f0f0f0;"></div>
<div style="position:absolute;left:605px;top:487px;width:55px;height:1px;background:rgba(150,150,150,0.6);"></div>
<div style="position:absolute;left:659px;top:468px;width:1px;height:20px;background:rgba(150,150,150,0.6);"></div>
<div class="t" style="left:608px;top:467.6px;width:51px;overflow:hidden;font-size:14.3px;color:#a0a0a0">повторный</div>
<div style="position:absolute;left:660px;top:468px;width:104px;height:20px;background:#ff80ff;"></div>
<div style="position:absolute;left:660px;top:487px;width:104px;height:1px;background:rgba(150,150,150,0.6);"></div>
<div style="position:absolute;left:763px;top:468px;width:1px;height:20px;background:rgba(150,150,150,0.6);"></div>
<div class="t" style="left:663px;top:467.6px;width:100px;overflow:hidden;font-size:14.3px;color:#000">Консультация</div>
<div style="position:absolute;left:764px;top:468px;width:103px;height:20px;background:#ff00ff;"></div>
<div style="position:absolute;left:764px;top:487px;width:103px;height:1px;background:rgba(150,150,150,0.6);"></div>
<div style="position:absolute;left:866px;top:468px;width:1px;height:20px;background:rgba(150,150,150,0.6);"></div>
<div class="t" style="left:767px;top:467.6px;width:99px;overflow:hidden;font-size:14.3px;color:#5a0a7a">Груп.занятие</div>
<div style="position:absolute;left:867px;top:468px;width:91px;height:20px;background:#fff;"></div>
<div style="position:absolute;left:867px;top:487px;width:91px;height:1px;background:rgba(150,150,150,0.6);"></div>
<div style="position:absolute;left:957px;top:468px;width:1px;height:20px;background:rgba(150,150,150,0.6);"></div>
<div style="position:absolute;left:958px;top:468px;width:79px;height:20px;background:#fff;"></div>
<div style="position:absolute;left:958px;top:487px;width:79px;height:1px;background:rgba(150,150,150,0.6);"></div>
<div style="position:absolute;left:1036px;top:468px;width:1px;height:20px;background:rgba(150,150,150,0.6);"></div>
<svg style="position:absolute;left:991px;top:471px" width="13" height="13" viewBox="0 0 13 13"><rect x="0.5" y="0.5" width="12" height="12" fill="#fff" stroke="#333"/></svg>
<div style="position:absolute;left:1037px;top:468px;width:55px;height:20px;background:#fff;"></div>
<div style="position:absolute;left:1037px;top:487px;width:55px;height:1px;background:rgba(150,150,150,0.6);"></div>
<div style="position:absolute;left:1091px;top:468px;width:1px;height:20px;background:rgba(150,150,150,0.6);"></div>
<svg style="position:absolute;left:1058px;top:471px" width="13" height="13" viewBox="0 0 13 13"><rect x="0.5" y="0.5" width="12" height="12" fill="#fff" stroke="#333"/></svg>
<div style="position:absolute;left:1092px;top:468px;width:200px;height:20px;background:#fff;"></div>
<div style="position:absolute;left:1092px;top:487px;width:200px;height:1px;background:rgba(150,150,150,0.6);"></div>
<div style="position:absolute;left:1291px;top:468px;width:1px;height:20px;background:rgba(150,150,150,0.6);"></div>
<div class="t" style="left:1095px;top:467.6px;width:196px;overflow:hidden;font-size:14.3px;color:#000">БУДУТ(31.07)-п/о будет, как всегда</div>
<div style="position:absolute;left:1292px;top:468px;width:60px;height:20px;background:#fff;"></div>
<div style="position:absolute;left:1292px;top:487px;width:60px;height:1px;background:rgba(150,150,150,0.6);"></div>
<div style="position:absolute;left:1351px;top:468px;width:1px;height:20px;background:rgba(150,150,150,0.6);"></div>
<div class="t" style="left:1295px;top:468.0px;width:57px;overflow:hidden;font-size:13.6px;color:#000">сч 712 от</div>
<div style="position:absolute;left:186px;top:487px;width:18px;height:20px;background:#fff;"></div>
<div style="position:absolute;left:204px;top:488px;width:43px;height:20px;background:#f0f0f0;"></div>
<div style="position:absolute;left:204px;top:507px;width:43px;height:1px;background:rgba(150,150,150,0.6);"></div>
<div style="position:absolute;left:246px;top:488px;width:1px;height:20px;background:rgba(150,150,150,0.6);"></div>
<div style="position:absolute;left:204px;top:488px;width:1px;height:20px;background:rgba(150,150,150,0.6);"></div>
<div class="t" style="left:204px;top:488.8px;width:39px;text-align:right;font-size:12.5px;color:#a0a0a0">31883</div>
<div style="position:absolute;left:247px;top:488px;width:103px;height:20px;background:#fff;"></div>
<div style="position:absolute;left:349px;top:488px;width:1px;height:20px;background:rgba(150,150,150,0.6);"></div>
<div style="position:absolute;left:350px;top:488px;width:60px;height:20px;background:#fff;"></div>
<div style="position:absolute;left:350px;top:507px;width:60px;height:1px;background:rgba(150,150,150,0.6);"></div>
<div style="position:absolute;left:409px;top:488px;width:1px;height:20px;background:rgba(150,150,150,0.6);"></div>
<div style="position:absolute;left:410px;top:488px;width:75px;height:20px;background:#fff;"></div>
<div style="position:absolute;left:410px;top:507px;width:75px;height:1px;background:rgba(150,150,150,0.6);"></div>
<div style="position:absolute;left:484px;top:488px;width:1px;height:20px;background:rgba(150,150,150,0.6);"></div>
<div class="t" style="left:413px;top:487.6px;width:71px;overflow:hidden;font-size:14.3px;color:#000">Гончарова</div>
<div style="position:absolute;left:485px;top:488px;width:19px;height:20px;background:#f0f0f0;"></div>
<div style="position:absolute;left:485px;top:507px;width:19px;height:1px;background:rgba(150,150,150,0.6);"></div>
<div style="position:absolute;left:503px;top:488px;width:1px;height:20px;background:rgba(150,150,150,0.6);"></div>
<div class="t" style="left:488px;top:487.6px;width:15px;overflow:hidden;font-size:14.3px;color:#a0a0a0">Svetlana</div>
<div style="position:absolute;left:504px;top:488px;width:10px;height:20px;background:#f0f0f0;"></div>
<div style="position:absolute;left:504px;top:507px;width:10px;height:1px;background:rgba(150,150,150,0.6);"></div>
<div style="position:absolute;left:513px;top:488px;width:1px;height:20px;background:rgba(150,150,150,0.6);"></div>
<div class="t" style="left:507px;top:487.6px;width:6px;overflow:hidden;font-size:14.3px;color:#a0a0a0">Иван</div>
<div style="position:absolute;left:514px;top:488px;width:15px;height:20px;background:#f0f0f0;"></div>
<div style="position:absolute;left:514px;top:507px;width:15px;height:1px;background:rgba(150,150,150,0.6);"></div>
<div style="position:absolute;left:528px;top:488px;width:1px;height:20px;background:rgba(150,150,150,0.6);"></div>
<div class="t" style="left:517px;top:487.6px;width:11px;overflow:hidden;font-size:14.3px;color:#a0a0a0">з</div>
<div style="position:absolute;left:529px;top:488px;width:76px;height:20px;background:#f0f0f0;"></div>
<div style="position:absolute;left:529px;top:507px;width:76px;height:1px;background:rgba(150,150,150,0.6);"></div>
<div style="position:absolute;left:604px;top:488px;width:1px;height:20px;background:rgba(150,150,150,0.6);"></div>
<div class="t" style="left:532px;top:487.6px;width:72px;overflow:hidden;font-size:14.3px;color:#a0a0a0">7</div>
<div style="position:absolute;left:605px;top:488px;width:55px;height:20px;background:#f0f0f0;"></div>
<div style="position:absolute;left:605px;top:507px;width:55px;height:1px;background:rgba(150,150,150,0.6);"></div>
<div style="position:absolute;left:659px;top:488px;width:1px;height:20px;background:rgba(150,150,150,0.6);"></div>
<div class="t" style="left:608px;top:487.6px;width:51px;overflow:hidden;font-size:14.3px;color:#a0a0a0">повторный</div>
<div style="position:absolute;left:660px;top:488px;width:104px;height:20px;background:#ff80ff;"></div>
<div style="position:absolute;left:660px;top:507px;width:104px;height:1px;background:rgba(150,150,150,0.6);"></div>
<div style="position:absolute;left:763px;top:488px;width:1px;height:20px;background:rgba(150,150,150,0.6);"></div>
<div class="t" style="left:663px;top:487.6px;width:100px;overflow:hidden;font-size:14.3px;color:#000">Консультация</div>
<div style="position:absolute;left:764px;top:488px;width:103px;height:20px;background:#ff00ff;"></div>
<div style="position:absolute;left:764px;top:507px;width:103px;height:1px;background:rgba(150,150,150,0.6);"></div>
<div style="position:absolute;left:866px;top:488px;width:1px;height:20px;background:rgba(150,150,150,0.6);"></div>
<div class="t" style="left:767px;top:487.6px;width:99px;overflow:hidden;font-size:14.3px;color:#5a0a7a">Груп.занятие</div>
<div style="position:absolute;left:867px;top:488px;width:91px;height:20px;background:#fff;"></div>
<div style="position:absolute;left:867px;top:507px;width:91px;height:1px;background:rgba(150,150,150,0.6);"></div>
<div style="position:absolute;left:957px;top:488px;width:1px;height:20px;background:rgba(150,150,150,0.6);"></div>
<div style="position:absolute;left:958px;top:488px;width:79px;height:20px;background:#fff;"></div>
<div style="position:absolute;left:958px;top:507px;width:79px;height:1px;background:rgba(150,150,150,0.6);"></div>
<div style="position:absolute;left:1036px;top:488px;width:1px;height:20px;background:rgba(150,150,150,0.6);"></div>
<svg style="position:absolute;left:991px;top:491px" width="13" height="13" viewBox="0 0 13 13"><rect x="0.5" y="0.5" width="12" height="12" fill="#fff" stroke="#333"/></svg>
<div style="position:absolute;left:1037px;top:488px;width:55px;height:20px;background:#fff;"></div>
<div style="position:absolute;left:1037px;top:507px;width:55px;height:1px;background:rgba(150,150,150,0.6);"></div>
<div style="position:absolute;left:1091px;top:488px;width:1px;height:20px;background:rgba(150,150,150,0.6);"></div>
<svg style="position:absolute;left:1058px;top:491px" width="13" height="13" viewBox="0 0 13 13"><rect x="0.5" y="0.5" width="12" height="12" fill="#fff" stroke="#333"/></svg>
<div style="position:absolute;left:1092px;top:488px;width:200px;height:20px;background:#fff;"></div>
<div style="position:absolute;left:1092px;top:507px;width:200px;height:1px;background:rgba(150,150,150,0.6);"></div>
<div style="position:absolute;left:1291px;top:488px;width:1px;height:20px;background:rgba(150,150,150,0.6);"></div>
<div class="t" style="left:1095px;top:487.6px;width:196px;overflow:hidden;font-size:14.3px;color:#000">.БУДУТ, п/о внесут на неделе</div>
<div style="position:absolute;left:1292px;top:488px;width:60px;height:20px;background:#fff;"></div>
<div style="position:absolute;left:1292px;top:507px;width:60px;height:1px;background:rgba(150,150,150,0.6);"></div>
<div style="position:absolute;left:1351px;top:488px;width:1px;height:20px;background:rgba(150,150,150,0.6);"></div>
<div class="t" style="left:1295px;top:488.0px;width:57px;overflow:hidden;font-size:13.6px;color:#000">сч691от2</div>
<div style="position:absolute;left:186px;top:507px;width:18px;height:20px;background:#fff;"></div>
<div style="position:absolute;left:204px;top:508px;width:43px;height:20px;background:#80ff80;"></div>
<div style="position:absolute;left:204px;top:527px;width:43px;height:1px;background:rgba(150,150,150,0.6);"></div>
<div style="position:absolute;left:246px;top:508px;width:1px;height:20px;background:rgba(150,150,150,0.6);"></div>
<div style="position:absolute;left:204px;top:508px;width:1px;height:20px;background:rgba(150,150,150,0.6);"></div>
<div class="t" style="left:204px;top:508.8px;width:39px;text-align:right;font-size:12.5px;color:#70c070">26415</div>
<div style="position:absolute;left:247px;top:508px;width:103px;height:20px;background:#fff;"></div>
<div style="position:absolute;left:349px;top:508px;width:1px;height:20px;background:rgba(150,150,150,0.6);"></div>
<div style="position:absolute;left:350px;top:508px;width:60px;height:20px;background:#80ff80;"></div>
<div style="position:absolute;left:350px;top:527px;width:60px;height:1px;background:rgba(150,150,150,0.6);"></div>
<div style="position:absolute;left:409px;top:508px;width:1px;height:20px;background:rgba(150,150,150,0.6);"></div>
<div style="position:absolute;left:410px;top:508px;width:75px;height:20px;background:#80ff80;"></div>
<div style="position:absolute;left:410px;top:527px;width:75px;height:1px;background:rgba(150,150,150,0.6);"></div>
<div style="position:absolute;left:484px;top:508px;width:1px;height:20px;background:rgba(150,150,150,0.6);"></div>
<div class="t" style="left:413px;top:507.6px;width:71px;overflow:hidden;font-size:14.3px;color:#000">Полетило . А</div>
<div style="position:absolute;left:485px;top:508px;width:19px;height:20px;background:#80ff80;"></div>
<div style="position:absolute;left:485px;top:527px;width:19px;height:1px;background:rgba(150,150,150,0.6);"></div>
<div style="position:absolute;left:503px;top:508px;width:1px;height:20px;background:rgba(150,150,150,0.6);"></div>
<div class="t" style="left:488px;top:507.6px;width:15px;overflow:hidden;font-size:14.3px;color:#70c070">pocta</div>
<div style="position:absolute;left:504px;top:508px;width:10px;height:20px;background:#80ff80;"></div>
<div style="position:absolute;left:504px;top:527px;width:10px;height:1px;background:rgba(150,150,150,0.6);"></div>
<div style="position:absolute;left:513px;top:508px;width:1px;height:20px;background:rgba(150,150,150,0.6);"></div>
<div class="t" style="left:507px;top:507.6px;width:6px;overflow:hidden;font-size:14.3px;color:#70c070">Иван</div>
<div style="position:absolute;left:514px;top:508px;width:15px;height:20px;background:#80ff80;"></div>
<div style="position:absolute;left:514px;top:527px;width:15px;height:1px;background:rgba(150,150,150,0.6);"></div>
<div style="position:absolute;left:528px;top:508px;width:1px;height:20px;background:rgba(150,150,150,0.6);"></div>
<div class="t" style="left:517px;top:507.6px;width:11px;overflow:hidden;font-size:14.3px;color:#70c070">с</div>
<div style="position:absolute;left:529px;top:508px;width:76px;height:20px;background:#80ff80;"></div>
<div style="position:absolute;left:529px;top:527px;width:76px;height:1px;background:rgba(150,150,150,0.6);"></div>
<div style="position:absolute;left:604px;top:508px;width:1px;height:20px;background:rgba(150,150,150,0.6);"></div>
<div class="t" style="left:532px;top:507.6px;width:72px;overflow:hidden;font-size:14.3px;color:#70c070">4</div>
<div style="position:absolute;left:605px;top:508px;width:55px;height:20px;background:#80ff80;"></div>
<div style="position:absolute;left:605px;top:527px;width:55px;height:1px;background:rgba(150,150,150,0.6);"></div>
<div style="position:absolute;left:659px;top:508px;width:1px;height:20px;background:rgba(150,150,150,0.6);"></div>
<div class="t" style="left:608px;top:507.6px;width:51px;overflow:hidden;font-size:14.3px;color:#70c070">первич</div>
<div style="position:absolute;left:660px;top:508px;width:104px;height:20px;background:#ff80ff;"></div>
<div style="position:absolute;left:660px;top:527px;width:104px;height:1px;background:rgba(150,150,150,0.6);"></div>
<div style="position:absolute;left:763px;top:508px;width:1px;height:20px;background:rgba(150,150,150,0.6);"></div>
<div class="t" style="left:663px;top:507.6px;width:100px;overflow:hidden;font-size:14.3px;color:#000">Консультация</div>
<div style="position:absolute;left:764px;top:508px;width:103px;height:20px;background:#ff00ff;"></div>
<div style="position:absolute;left:764px;top:527px;width:103px;height:1px;background:rgba(150,150,150,0.6);"></div>
<div style="position:absolute;left:866px;top:508px;width:1px;height:20px;background:rgba(150,150,150,0.6);"></div>
<div class="t" style="left:767px;top:507.6px;width:99px;overflow:hidden;font-size:14.3px;color:#5a0a7a">Груп.занятие</div>
<div style="position:absolute;left:867px;top:508px;width:91px;height:20px;background:#80ff80;"></div>
<div style="position:absolute;left:867px;top:527px;width:91px;height:1px;background:rgba(150,150,150,0.6);"></div>
<div style="position:absolute;left:957px;top:508px;width:1px;height:20px;background:rgba(150,150,150,0.6);"></div>
<div style="position:absolute;left:958px;top:508px;width:79px;height:20px;background:#80ff80;"></div>
<div style="position:absolute;left:958px;top:527px;width:79px;height:1px;background:rgba(150,150,150,0.6);"></div>
<div style="position:absolute;left:1036px;top:508px;width:1px;height:20px;background:rgba(150,150,150,0.6);"></div>
<svg style="position:absolute;left:991px;top:511px" width="13" height="13" viewBox="0 0 13 13"><rect x="0.5" y="0.5" width="12" height="12" fill="#fff" stroke="#333"/><path d="M3 6.5 L5.5 9 L10 3.5" stroke="#333" stroke-width="1.2" fill="none"/></svg>
<div style="position:absolute;left:1037px;top:508px;width:55px;height:20px;background:#80ff80;"></div>
<div style="position:absolute;left:1037px;top:527px;width:55px;height:1px;background:rgba(150,150,150,0.6);"></div>
<div style="position:absolute;left:1091px;top:508px;width:1px;height:20px;background:rgba(150,150,150,0.6);"></div>
<svg style="position:absolute;left:1058px;top:511px" width="13" height="13" viewBox="0 0 13 13"><rect x="0.5" y="0.5" width="12" height="12" fill="#fff" stroke="#333"/></svg>
<div style="position:absolute;left:1092px;top:508px;width:200px;height:20px;background:#80ff80;"></div>
<div style="position:absolute;left:1092px;top:527px;width:200px;height:1px;background:rgba(150,150,150,0.6);"></div>
<div style="position:absolute;left:1291px;top:508px;width:1px;height:20px;background:rgba(150,150,150,0.6);"></div>
<div style="position:absolute;left:1292px;top:508px;width:60px;height:20px;background:#80ff80;"></div>
<div style="position:absolute;left:1292px;top:527px;width:60px;height:1px;background:rgba(150,150,150,0.6);"></div>
<div style="position:absolute;left:1351px;top:508px;width:1px;height:20px;background:rgba(150,150,150,0.6);"></div>
<div class="t" style="left:1295px;top:508.0px;width:57px;overflow:hidden;font-size:13.6px;color:#000">сч1000от</div>
<div style="position:absolute;left:186px;top:527px;width:18px;height:20px;background:#fff;"></div>
<div style="position:absolute;left:204px;top:528px;width:43px;height:20px;background:#80ff80;"></div>
<div style="position:absolute;left:204px;top:547px;width:43px;height:1px;background:rgba(150,150,150,0.6);"></div>
<div style="position:absolute;left:246px;top:528px;width:1px;height:20px;background:rgba(150,150,150,0.6);"></div>
<div style="position:absolute;left:204px;top:528px;width:1px;height:20px;background:rgba(150,150,150,0.6);"></div>
<div class="t" style="left:204px;top:528.8px;width:39px;text-align:right;font-size:12.5px;color:#70c070">25900</div>
<div style="position:absolute;left:247px;top:528px;width:103px;height:20px;background:#fff;"></div>
<div style="position:absolute;left:349px;top:528px;width:1px;height:20px;background:rgba(150,150,150,0.6);"></div>
<div style="position:absolute;left:350px;top:528px;width:60px;height:20px;background:#80ff80;"></div>
<div style="position:absolute;left:350px;top:547px;width:60px;height:1px;background:rgba(150,150,150,0.6);"></div>
<div style="position:absolute;left:409px;top:528px;width:1px;height:20px;background:rgba(150,150,150,0.6);"></div>
<div style="position:absolute;left:410px;top:528px;width:75px;height:20px;background:#80ff80;"></div>
<div style="position:absolute;left:410px;top:547px;width:75px;height:1px;background:rgba(150,150,150,0.6);"></div>
<div style="position:absolute;left:484px;top:528px;width:1px;height:20px;background:rgba(150,150,150,0.6);"></div>
<div class="t" style="left:413px;top:527.6px;width:71px;overflow:hidden;font-size:14.3px;color:#000">Гусева Арина</div>
<div style="position:absolute;left:485px;top:528px;width:19px;height:20px;background:#80ff80;"></div>
<div style="position:absolute;left:485px;top:547px;width:19px;height:1px;background:rgba(150,150,150,0.6);"></div>
<div style="position:absolute;left:503px;top:528px;width:1px;height:20px;background:rgba(150,150,150,0.6);"></div>
<div class="t" style="left:488px;top:527.6px;width:15px;overflow:hidden;font-size:14.3px;color:#70c070">nyuta</div>
<div style="position:absolute;left:504px;top:528px;width:10px;height:20px;background:#80ff80;"></div>
<div style="position:absolute;left:504px;top:547px;width:10px;height:1px;background:rgba(150,150,150,0.6);"></div>
<div style="position:absolute;left:513px;top:528px;width:1px;height:20px;background:rgba(150,150,150,0.6);"></div>
<div class="t" style="left:507px;top:527.6px;width:6px;overflow:hidden;font-size:14.3px;color:#70c070">Иван</div>
<div style="position:absolute;left:514px;top:528px;width:15px;height:20px;background:#80ff80;"></div>
<div style="position:absolute;left:514px;top:547px;width:15px;height:1px;background:rgba(150,150,150,0.6);"></div>
<div style="position:absolute;left:528px;top:528px;width:1px;height:20px;background:rgba(150,150,150,0.6);"></div>
<div class="t" style="left:517px;top:527.6px;width:11px;overflow:hidden;font-size:14.3px;color:#70c070">С</div>
<div style="position:absolute;left:529px;top:528px;width:76px;height:20px;background:#80ff80;"></div>
<div style="position:absolute;left:529px;top:547px;width:76px;height:1px;background:rgba(150,150,150,0.6);"></div>
<div style="position:absolute;left:604px;top:528px;width:1px;height:20px;background:rgba(150,150,150,0.6);"></div>
<div class="t" style="left:532px;top:527.6px;width:72px;overflow:hidden;font-size:14.3px;color:#70c070">4</div>
<div style="position:absolute;left:605px;top:528px;width:55px;height:20px;background:#80ff80;"></div>
<div style="position:absolute;left:605px;top:547px;width:55px;height:1px;background:rgba(150,150,150,0.6);"></div>
<div style="position:absolute;left:659px;top:528px;width:1px;height:20px;background:rgba(150,150,150,0.6);"></div>
<div class="t" style="left:608px;top:527.6px;width:51px;overflow:hidden;font-size:14.3px;color:#70c070">первич</div>
<div style="position:absolute;left:660px;top:528px;width:104px;height:20px;background:#ff80ff;"></div>
<div style="position:absolute;left:660px;top:547px;width:104px;height:1px;background:rgba(150,150,150,0.6);"></div>
<div style="position:absolute;left:763px;top:528px;width:1px;height:20px;background:rgba(150,150,150,0.6);"></div>
<div class="t" style="left:663px;top:527.6px;width:100px;overflow:hidden;font-size:14.3px;color:#000">Консультация</div>
<div style="position:absolute;left:764px;top:528px;width:103px;height:20px;background:#ff00ff;"></div>
<div style="position:absolute;left:764px;top:547px;width:103px;height:1px;background:rgba(150,150,150,0.6);"></div>
<div style="position:absolute;left:866px;top:528px;width:1px;height:20px;background:rgba(150,150,150,0.6);"></div>
<div class="t" style="left:767px;top:527.6px;width:99px;overflow:hidden;font-size:14.3px;color:#5a0a7a">Груп.занятие</div>
<div style="position:absolute;left:867px;top:528px;width:91px;height:20px;background:#80ff80;"></div>
<div style="position:absolute;left:867px;top:547px;width:91px;height:1px;background:rgba(150,150,150,0.6);"></div>
<div style="position:absolute;left:957px;top:528px;width:1px;height:20px;background:rgba(150,150,150,0.6);"></div>
<div style="position:absolute;left:958px;top:528px;width:79px;height:20px;background:#80ff80;"></div>
<div style="position:absolute;left:958px;top:547px;width:79px;height:1px;background:rgba(150,150,150,0.6);"></div>
<div style="position:absolute;left:1036px;top:528px;width:1px;height:20px;background:rgba(150,150,150,0.6);"></div>
<svg style="position:absolute;left:991px;top:531px" width="13" height="13" viewBox="0 0 13 13"><rect x="0.5" y="0.5" width="12" height="12" fill="#fff" stroke="#333"/><path d="M3 6.5 L5.5 9 L10 3.5" stroke="#333" stroke-width="1.2" fill="none"/></svg>
<div style="position:absolute;left:1037px;top:528px;width:55px;height:20px;background:#80ff80;"></div>
<div style="position:absolute;left:1037px;top:547px;width:55px;height:1px;background:rgba(150,150,150,0.6);"></div>
<div style="position:absolute;left:1091px;top:528px;width:1px;height:20px;background:rgba(150,150,150,0.6);"></div>
<svg style="position:absolute;left:1058px;top:531px" width="13" height="13" viewBox="0 0 13 13"><rect x="0.5" y="0.5" width="12" height="12" fill="#fff" stroke="#333"/></svg>
<div style="position:absolute;left:1092px;top:528px;width:200px;height:20px;background:#80ff80;"></div>
<div style="position:absolute;left:1092px;top:547px;width:200px;height:1px;background:rgba(150,150,150,0.6);"></div>
<div style="position:absolute;left:1291px;top:528px;width:1px;height:20px;background:rgba(150,150,150,0.6);"></div>
<div style="position:absolute;left:1292px;top:528px;width:60px;height:20px;background:#80ff80;"></div>
<div style="position:absolute;left:1292px;top:547px;width:60px;height:1px;background:rgba(150,150,150,0.6);"></div>
<div style="position:absolute;left:1351px;top:528px;width:1px;height:20px;background:rgba(150,150,150,0.6);"></div>
<div class="t" style="left:1295px;top:528.0px;width:57px;overflow:hidden;font-size:13.6px;color:#000">сч 1192 от</div>
<div style="position:absolute;left:186px;top:547px;width:18px;height:20px;background:#fff;"></div>
<div style="position:absolute;left:204px;top:548px;width:43px;height:20px;background:#80ff80;"></div>
<div style="position:absolute;left:204px;top:567px;width:43px;height:1px;background:rgba(150,150,150,0.6);"></div>
<div style="position:absolute;left:246px;top:548px;width:1px;height:20px;background:rgba(150,150,150,0.6);"></div>
<div style="position:absolute;left:204px;top:548px;width:1px;height:20px;background:rgba(150,150,150,0.6);"></div>
<div class="t" style="left:204px;top:548.8px;width:39px;text-align:right;font-size:12.5px;color:#70c070">25898</div>
<div style="position:absolute;left:247px;top:548px;width:103px;height:20px;background:#fff;"></div>
<div style="position:absolute;left:349px;top:548px;width:1px;height:20px;background:rgba(150,150,150,0.6);"></div>
<div style="position:absolute;left:350px;top:548px;width:60px;height:20px;background:#80ff80;"></div>
<div style="position:absolute;left:350px;top:567px;width:60px;height:1px;background:rgba(150,150,150,0.6);"></div>
<div style="position:absolute;left:409px;top:548px;width:1px;height:20px;background:rgba(150,150,150,0.6);"></div>
<div style="position:absolute;left:410px;top:548px;width:75px;height:20px;background:#80ff80;"></div>
<div style="position:absolute;left:410px;top:567px;width:75px;height:1px;background:rgba(150,150,150,0.6);"></div>
<div style="position:absolute;left:484px;top:548px;width:1px;height:20px;background:rgba(150,150,150,0.6);"></div>
<div class="t" style="left:413px;top:547.6px;width:71px;overflow:hidden;font-size:14.3px;color:#000">Емельянова</div>
<div style="position:absolute;left:485px;top:548px;width:19px;height:20px;background:#80ff80;"></div>
<div style="position:absolute;left:485px;top:567px;width:19px;height:1px;background:rgba(150,150,150,0.6);"></div>
<div style="position:absolute;left:503px;top:548px;width:1px;height:20px;background:rgba(150,150,150,0.6);"></div>
<div class="t" style="left:488px;top:547.6px;width:15px;overflow:hidden;font-size:14.3px;color:#70c070">ukraina</div>
<div style="position:absolute;left:504px;top:548px;width:10px;height:20px;background:#80ff80;"></div>
<div style="position:absolute;left:504px;top:567px;width:10px;height:1px;background:rgba(150,150,150,0.6);"></div>
<div style="position:absolute;left:513px;top:548px;width:1px;height:20px;background:rgba(150,150,150,0.6);"></div>
<div class="t" style="left:507px;top:547.6px;width:6px;overflow:hidden;font-size:14.3px;color:#70c070">Иван</div>
<div style="position:absolute;left:514px;top:548px;width:15px;height:20px;background:#80ff80;"></div>
<div style="position:absolute;left:514px;top:567px;width:15px;height:1px;background:rgba(150,150,150,0.6);"></div>
<div style="position:absolute;left:528px;top:548px;width:1px;height:20px;background:rgba(150,150,150,0.6);"></div>
<div class="t" style="left:517px;top:547.6px;width:11px;overflow:hidden;font-size:14.3px;color:#70c070">т</div>
<div style="position:absolute;left:529px;top:548px;width:76px;height:20px;background:#80ff80;"></div>
<div style="position:absolute;left:529px;top:567px;width:76px;height:1px;background:rgba(150,150,150,0.6);"></div>
<div style="position:absolute;left:604px;top:548px;width:1px;height:20px;background:rgba(150,150,150,0.6);"></div>
<div class="t" style="left:532px;top:547.6px;width:72px;overflow:hidden;font-size:14.3px;color:#70c070">4</div>
<div style="position:absolute;left:605px;top:548px;width:55px;height:20px;background:#80ff80;"></div>
<div style="position:absolute;left:605px;top:567px;width:55px;height:1px;background:rgba(150,150,150,0.6);"></div>
<div style="position:absolute;left:659px;top:548px;width:1px;height:20px;background:rgba(150,150,150,0.6);"></div>
<div class="t" style="left:608px;top:547.6px;width:51px;overflow:hidden;font-size:14.3px;color:#70c070">повторный</div>
<div style="position:absolute;left:660px;top:548px;width:104px;height:20px;background:#ff80ff;"></div>
<div style="position:absolute;left:660px;top:567px;width:104px;height:1px;background:rgba(150,150,150,0.6);"></div>
<div style="position:absolute;left:763px;top:548px;width:1px;height:20px;background:rgba(150,150,150,0.6);"></div>
<div class="t" style="left:663px;top:547.6px;width:100px;overflow:hidden;font-size:14.3px;color:#000">Консультация</div>
<div style="position:absolute;left:764px;top:548px;width:103px;height:20px;background:#ff00ff;"></div>
<div style="position:absolute;left:764px;top:567px;width:103px;height:1px;background:rgba(150,150,150,0.6);"></div>
<div style="position:absolute;left:866px;top:548px;width:1px;height:20px;background:rgba(150,150,150,0.6);"></div>
<div class="t" style="left:767px;top:547.6px;width:99px;overflow:hidden;font-size:14.3px;color:#5a0a7a">Груп.занятие</div>
<div style="position:absolute;left:867px;top:548px;width:91px;height:20px;background:#80ff80;"></div>
<div style="position:absolute;left:867px;top:567px;width:91px;height:1px;background:rgba(150,150,150,0.6);"></div>
<div style="position:absolute;left:957px;top:548px;width:1px;height:20px;background:rgba(150,150,150,0.6);"></div>
<div style="position:absolute;left:958px;top:548px;width:79px;height:20px;background:#80ff80;"></div>
<div style="position:absolute;left:958px;top:567px;width:79px;height:1px;background:rgba(150,150,150,0.6);"></div>
<div style="position:absolute;left:1036px;top:548px;width:1px;height:20px;background:rgba(150,150,150,0.6);"></div>
<svg style="position:absolute;left:991px;top:551px" width="13" height="13" viewBox="0 0 13 13"><rect x="0.5" y="0.5" width="12" height="12" fill="#fff" stroke="#333"/><path d="M3 6.5 L5.5 9 L10 3.5" stroke="#333" stroke-width="1.2" fill="none"/></svg>
<div style="position:absolute;left:1037px;top:548px;width:55px;height:20px;background:#80ff80;"></div>
<div style="position:absolute;left:1037px;top:567px;width:55px;height:1px;background:rgba(150,150,150,0.6);"></div>
<div style="position:absolute;left:1091px;top:548px;width:1px;height:20px;background:rgba(150,150,150,0.6);"></div>
<svg style="position:absolute;left:1058px;top:551px" width="13" height="13" viewBox="0 0 13 13"><rect x="0.5" y="0.5" width="12" height="12" fill="#fff" stroke="#333"/></svg>
<div style="position:absolute;left:1092px;top:548px;width:200px;height:20px;background:#80ff80;"></div>
<div style="position:absolute;left:1092px;top:567px;width:200px;height:1px;background:rgba(150,150,150,0.6);"></div>
<div style="position:absolute;left:1291px;top:548px;width:1px;height:20px;background:rgba(150,150,150,0.6);"></div>
<div class="t" style="left:1095px;top:547.6px;width:196px;overflow:hidden;font-size:14.3px;color:#000">КОН во второй половине дня!!</div>
<div style="position:absolute;left:1292px;top:548px;width:60px;height:20px;background:#80ff80;"></div>
<div style="position:absolute;left:1292px;top:567px;width:60px;height:1px;background:rgba(150,150,150,0.6);"></div>
<div style="position:absolute;left:1351px;top:548px;width:1px;height:20px;background:rgba(150,150,150,0.6);"></div>
<div class="t" style="left:1295px;top:548.0px;width:57px;overflow:hidden;font-size:13.6px;color:#000">сч735от1</div>
<div style="position:absolute;left:205px;top:348px;width:41px;height:20px;border:1px solid #000;"></div>
<svg style="position:absolute;left:193px;top:351px" width="7" height="11"><path d="M0 0 L6 5.5 L0 11Z" fill="#000"/></svg>
<div style="position:absolute;left:186px;top:676px;width:1166px;height:17px;background:#f0f0f0;border-top:1px solid #fff;"></div>
<div style="position:absolute;left:203px;top:677px;width:67px;height:15px;background:#cdcdcd;"></div>
<svg style="position:absolute;left:189px;top:680px" width="8" height="9"><path d="M6.5 1 L2.5 4.5 L6.5 8" stroke="#505050" stroke-width="2" fill="none"/></svg>
<svg style="position:absolute;left:1340px;top:680px" width="8" height="9"><path d="M1.5 1 L5.5 4.5 L1.5 8" stroke="#505050" stroke-width="2" fill="none"/></svg>
<div class="t" style="left:1007px;top:630.5px;font-size:20px;color:rgba(120,120,120,0.48);">Активация Windows</div>
<div class="t" style="left:1007px;top:657.0px;font-size:15px;color:rgba(120,120,120,0.48);">Чтобы активировать Windows, перейдите в</div>
<div class="t" style="left:1007px;top:677.0px;font-size:15px;color:rgba(120,120,120,0.48);">раздел "Параметры".</div>
<div style="position:absolute;left:0px;top:707px;width:1366px;height:21px;background:#f0f0f0;"></div>
<div class="t" style="left:5px;top:711.0px;font-size:11.6px;color:#000;">Готово</div>
<div style="position:absolute;left:0px;top:709px;width:720px;height:19px;border-top:1px solid #a0a0a0;border-left:1px solid #a0a0a0;border-right:1px solid #fff;"></div>
<div style="position:absolute;left:722px;top:709px;width:23px;height:19px;border-top:1px solid #a0a0a0;border-left:1px solid #a0a0a0;border-right:1px solid #fff;"></div>
<div class="t" style="left:726px;top:711.8px;font-size:11.2px;color:#000;">БД:</div>
<div style="position:absolute;left:747px;top:709px;width:356px;height:19px;border-top:1px solid #a0a0a0;border-left:1px solid #a0a0a0;border-right:1px solid #fff;"></div>
<div class="t" style="left:751px;top:712.0px;font-size:10.8px;color:#000;">C:\Users\Yury\Desktop\Дельфинарий\Otchjotpoterapi\Пустая база.mdb</div>
<div style="position:absolute;left:1105px;top:709px;width:49px;height:19px;border-top:1px solid #a0a0a0;border-left:1px solid #a0a0a0;border-right:1px solid #fff;"></div>
<div class="t" style="left:1109px;top:711.8px;font-size:11.2px;color:#000;">2 952 Kb</div>
<div style="position:absolute;left:1156px;top:709px;width:35px;height:19px;border-top:1px solid #a0a0a0;border-left:1px solid #a0a0a0;border-right:1px solid #fff;"></div>
<div class="t" style="left:1160px;top:711.8px;font-size:11.2px;color:#000;">admin</div>
<div style="position:absolute;left:1193px;top:709px;width:88px;height:19px;border-top:1px solid #a0a0a0;border-left:1px solid #a0a0a0;border-right:1px solid #fff;"></div>
<div class="t" style="left:1197px;top:711.8px;font-size:11.2px;color:#000;">Администратор</div>
<div style="position:absolute;left:1283px;top:709px;width:64px;height:19px;border-top:1px solid #a0a0a0;border-left:1px solid #a0a0a0;border-right:1px solid #fff;"></div>
<div class="t" style="left:1287px;top:711.8px;font-size:11.2px;color:#000;">05.10.2017</div>
<div style="position:absolute;left:0px;top:728px;width:1366px;height:40px;background:#050508;"></div>
<div style="position:absolute;left:245px;top:728px;width:48px;height:40px;background:#333336;"></div>
<div style="position:absolute;left:151px;top:766px;width:40px;height:2px;background:#76b9ed;"></div>
<div style="position:absolute;left:245px;top:766px;width:48px;height:2px;background:#76b9ed;"></div>
<div style="position:absolute;left:543px;top:766px;width:40px;height:2px;background:#76b9ed;"></div>
<div style="position:absolute;left:592px;top:766px;width:40px;height:2px;background:#76b9ed;"></div>
<div style="position:absolute;left:641px;top:766px;width:40px;height:2px;background:#76b9ed;"></div>
<svg style="position:absolute;left:16px;top:739px" width="17" height="17"><path d="M0 2.3 L6.8 1.3 V7.7 H0Z M7.8 1.1 L17 0 V7.7 H7.8Z M0 8.7 H6.8 V15.1 L0 14.1Z M7.8 8.7 H17 V17 L7.8 15.9Z" fill="#fff"/></svg>
<svg style="position:absolute;left:62px;top:738px" width="20" height="20"><circle cx="11.5" cy="7.5" r="5.5" fill="none" stroke="#fff" stroke-width="1.3"/><path d="M7.6 11.4 L1.5 17.5" stroke="#fff" stroke-width="1.5"/></svg>
<svg style="position:absolute;left:109px;top:740px" width="22" height="16"><rect x="4.5" y="1.5" width="13" height="13" fill="none" stroke="#fff" stroke-width="1.2"/><path d="M2.5 3.5 H0.8 V12.5 H2.5 M19.5 3.5 H21.2 V12.5 H19.5" fill="none" stroke="#fff" stroke-width="1.1"/></svg>
<svg style="position:absolute;left:160px;top:738px" width="22" height="19"><path d="M0.5 2 Q0.5 1 1.5 1 H7.5 L9 2.5 H20.5 Q21.5 2.5 21.5 3.5 V18.5 H0.5Z" fill="#f8d775"/><path d="M0.5 5 H21.5" stroke="#e8b84a" stroke-width="1"/><path d="M5 11 H17 V18.5 H14 V14.5 H8 V18.5 H5Z" fill="#4ab4e8"/></svg>
<svg style="position:absolute;left:208px;top:736px" width="23" height="22"><rect x="1.5" y="0.5" width="17" height="13" fill="#e8e8e8" stroke="#9a9a9a"/><rect x="1.5" y="0.5" width="17" height="2.5" fill="#7a8a9a"/><rect x="3" y="5" width="5" height="6" fill="#fff" stroke="#aaa" stroke-width="0.6"/><path d="M3 12 L22 12 L21 21.5 H4Z" fill="#d82a2a"/><path d="M9 12 V9.5 H15 V12" fill="none" stroke="#8a1a1a" stroke-width="1.4"/><path d="M3.5 15 H21.5" stroke="#9a1a1a" stroke-width="1"/><rect x="11" y="14" width="3" height="2.5" fill="#f0c040"/></svg>
<svg style="position:absolute;left:257px;top:735px" width="26" height="25"><rect x="0.5" y="0.7" width="1.6" height="1.6" fill="#e8e8e8"/><path d="M3.5 1.5 H25" stroke="#dcdcdc" stroke-width="1.3" stroke-dasharray="3 0.8"/><rect x="0.5" y="4.7" width="1.6" height="1.6" fill="#e8e8e8"/><path d="M3.5 5.5 H25" stroke="#dcdcdc" stroke-width="1.3" stroke-dasharray="3 0.8"/><rect x="0.5" y="8.7" width="1.6" height="1.6" fill="#e8e8e8"/><path d="M3.5 9.5 H25" stroke="#dcdcdc" stroke-width="1.3" stroke-dasharray="3 0.8"/><rect x="0.5" y="12.7" width="1.6" height="1.6" fill="#e8e8e8"/><path d="M3.5 13.5 H25" stroke="#dcdcdc" stroke-width="1.3" stroke-dasharray="3 0.8"/><rect x="0.5" y="16.4" width="1.6" height="1.6" fill="#e8e8e8"/><path d="M3.5 17.2 H25" stroke="#dcdcdc" stroke-width="1.3" stroke-dasharray="3 0.8"/><rect x="0.5" y="20.0" width="1.6" height="1.6" fill="#e8e8e8"/><path d="M3.5 20.8 H25" stroke="#dcdcdc" stroke-width="1.3" stroke-dasharray="3 0.8"/><path d="M3.5 18 L8 14 L12 18 L18 9 L23 6" stroke="#b02030" stroke-width="1.6" fill="none"/><path d="M3.5 13.5 L7 10 L13 16 L18 12 L23 18" stroke="#14145a" stroke-width="1.6" fill="none"/><rect x="4.5" y="23" width="1.6" height="1.6" fill="#e0e0e0"/><rect x="8.5" y="23" width="1.6" height="1.6" fill="#e0e0e0"/><rect x="12.5" y="23" width="1.6" height="1.6" fill="#e0e0e0"/><rect x="16.5" y="23" width="1.6" height="1.6" fill="#e0e0e0"/><rect x="20.5" y="23" width="1.6" height="1.6" fill="#e0e0e0"/><rect x="24" y="23" width="1.6" height="1.6" fill="#e0e0e0"/></svg>
<svg style="position:absolute;left:306px;top:736px" width="25" height="24"><rect x="0.5" y="0.5" width="16" height="11" fill="#4a8ad0" stroke="#3a6aa0"/><rect x="2" y="2" width="13" height="6" fill="#9acaf0"/><path d="M6 12 V14 M3 14 H9" stroke="#888"/><circle cx="8" cy="13" r="3" fill="#f0c8a0"/><path d="M5.5 11.5 Q8 8.5 10.5 11.5" fill="#3a2a1a"/><path d="M2.5 24 Q2.5 16 8 16.5 Q13.5 16 13.5 24Z" fill="#3ac03a"/><circle cx="17" cy="10" r="3" fill="#f0c8a0"/><path d="M14 9 Q17 5 20 9" fill="#e8c040"/><path d="M12.5 20 Q12.5 13.5 17 14 Q21.5 13.5 21.5 20Z" fill="#d03a3a"/></svg>
<svg style="position:absolute;left:355px;top:736px" width="24" height="24"><path d="M4 6 H20 V23 H4Z" fill="#e8962a"/><path d="M4 6 L0.5 10 L4 13 M20 6 L23.5 10 L20 13" fill="#f0a840"/><path d="M6 0.5 H18 V6 H6Z" fill="#f0b050"/><path d="M4 10 H20" stroke="#c87818" stroke-width="1"/><path d="M8 18 V22 M7 19 L8 17.5 L9 19 M12 18 V22 M11 19 L12 17.5 L13 19" stroke="#5a3a10" stroke-width="0.9" fill="none"/><rect x="14" y="12" width="4" height="2" fill="#f8d8a0"/></svg>
<svg style="position:absolute;left:405px;top:737px" width="22" height="22"><g transform="translate(11,11)"><path d="M0 0 L-9.53 -5.5 A11 11 0 0 1 9.53 -5.5Z" fill="#db4437"/><path d="M0 0 L9.53 -5.5 A11 11 0 0 1 0 11Z" fill="#f4c20d"/><path d="M0 0 L0 11 A11 11 0 0 1 -9.53 -5.5Z" fill="#0f9d58"/><circle r="5.2" fill="#fff"/><circle r="4" fill="#4285f4"/></g></svg>
<svg style="position:absolute;left:552px;top:737px" width="22" height="22"><g transform="translate(11,11)"><path d="M0 0 L-9.53 -5.5 A11 11 0 0 1 9.53 -5.5Z" fill="#db4437"/><path d="M0 0 L9.53 -5.5 A11 11 0 0 1 0 11Z" fill="#f4c20d"/><path d="M0 0 L0 11 A11 11 0 0 1 -9.53 -5.5Z" fill="#0f9d58"/><circle r="5.2" fill="#fff"/><circle r="4" fill="#4285f4"/></g></svg>
<svg style="position:absolute;left:454px;top:737px" width="22" height="22"><circle cx="11" cy="11" r="10.3" fill="#3a3a3a" stroke="#d8d8d8" stroke-width="1.2"/><circle cx="11" cy="11" r="8" fill="#1a1a1a"/><circle cx="11" cy="11" r="6" fill="#f00000"/></svg>
<svg style="position:absolute;left:502px;top:735px" width="24" height="26"><path d="M1 7 L9 12 L18 3 L23 3 V25 H1Z" fill="#68217a"/><path d="M1.5 7.5 L4.8 6.8 L9.5 11 L18.5 2.8 L22.5 4.6 V22.4 L18.5 24.2 L9.5 15 L4.8 18.2 L1.5 17.5Z M4.8 9.8 V15.2 L7.6 12.5Z M18.5 8.2 V17.8 L12.8 13Z" fill="#f8f0ff" fill-rule="evenodd" stroke="#8a3aa0" stroke-width="0.6"/></svg>
<svg style="position:absolute;left:600px;top:736px" width="23" height="24"><defs><linearGradient id="npg" x1="0" y1="0" x2="0" y2="1"><stop offset="0" stop-color="#f8f8e8"/><stop offset="0.45" stop-color="#e8f0a0"/><stop offset="1" stop-color="#3ab03a"/></defs><path d="M0.5 1.5 H14 L18 5.5 V23.5 H0.5Z" fill="url(#npg)" stroke="#8a9a7a"/><path d="M2 3 H13" stroke="#888" stroke-dasharray="1 1"/><path d="M5 18 V8 Q5 6.5 6.5 7 V16 M8.5 11 H10.5 M11.5 11 H13" stroke="#2a2a2a" stroke-width="1.2" fill="none"/><path d="M12 17 L21 2 L22.5 3 L13.5 18Z" fill="#e8c040" stroke="#9a7a1a" stroke-width="0.6"/></svg>
<svg style="position:absolute;left:649px;top:736px" width="25" height="24"><path d="M12 4 Q1 3 1 12 Q1 19 8 18 Q10 17.5 10 19.5 Q10 22.5 14 21.5 Q21 19 21 12 Q21 4 12 4Z" fill="#cfe4f5"/><circle cx="6" cy="11" r="1.8" fill="#e05a2a"/><circle cx="9" cy="7" r="1.8" fill="#7ac83a"/><circle cx="14" cy="6.5" r="1.8" fill="#f0a020"/><circle cx="9" cy="14" r="1.5" fill="#1a1a2a"/><path d="M11 23 L21 6" stroke="#c8903a" stroke-width="1.6"/><path d="M20 7 L23.5 1 L24.5 1.5 L21.5 8Z" fill="#e8b060"/></svg>
<svg style="position:absolute;left:1145px;top:743px" width="12" height="8"><path d="M0.7 7 L6 1.5 L11.3 7" stroke="#fff" stroke-width="1.2" fill="none"/></svg>
<svg style="position:absolute;left:1167px;top:742px" width="17" height="12"><path d="M1.5 0 V3 M4.5 0 V3" stroke="#fff" stroke-width="1.1"/><path d="M0.5 3 H5.5 V5.5 Q5.5 7 3 7 Q0.5 7 0.5 5.5Z" fill="#fff"/><path d="M3 7 V11" stroke="#fff"/><rect x="5.5" y="3.5" width="10" height="7" fill="none" stroke="#fff"/><rect x="7" y="5" width="7" height="4" fill="#fff"/><rect x="15.5" y="5.5" width="1.5" height="3" fill="#fff"/></svg>
<svg style="position:absolute;left:1194px;top:742px" width="13" height="13"><path d="M0.8 12.5 A11.7 11.7 0 0 1 12.5 0.8 M3.5 12.5 A9 9 0 0 1 12.5 3.5 M6.2 12.5 A6.3 6.3 0 0 1 12.5 6.2 M8.9 12.5 A3.6 3.6 0 0 1 12.5 8.9" stroke="#fff" stroke-width="1" fill="none" opacity="0.9"/><circle cx="11" cy="11" r="1.5" fill="#fff"/></svg>
<div class="t" style="left:1218px;top:740.8px;font-size:11.2px;color:#fff;">РУС</div>
<div class="t" style="left:1253px;top:732px;width:54px;text-align:center;font-size:11.2px;color:#fff;letter-spacing:-0.2px">13:17</div>
<div class="t" style="left:1251px;top:750px;width:58px;text-align:center;font-size:11px;color:#fff;letter-spacing:-0.15px">05.10.2017</div>
<svg style="position:absolute;left:1325px;top:740px" width="17" height="17"><path d="M0.6 0.6 H15.4 V11.4 H10 L8 14 L6 11.4 H0.6Z" fill="none" stroke="#fff" stroke-width="1.2"/></svg>
<div style="position:absolute;left:1361px;top:728px;width:1px;height:40px;background:#5a5a5a;"></div>
<div style="position:absolute;left:657px;top:119px;width:231px;height:188px;background:#fff;border:1px solid #48709a;box-shadow:0 0 0 1px rgba(150,200,240,0.45), 2px 3px 10px rgba(0,0,0,0.22);"></div>
<div class="t" style="left:661px;top:124.8px;font-size:12px;color:#000;">Количество услуг</div>
<svg style="position:absolute;left:866px;top:126px" width="12" height="12"><path d="M1 1 L11 11 M11 1 L1 11" stroke="#000" stroke-width="1"/></svg>
<div style="position:absolute;left:658px;top:257px;width:229px;height:49px;background:#f0f0f0;"></div>
<div style="position:absolute;left:782px;top:270px;width:86px;height:24px;background:#e1e1e1;border:2px solid #1a6ec0;"></div>
<div class="t" style="left:816.5px;top:274.8px;font-size:12.5px;color:#000;">OK</div>
<div class="t" style="left:670px;top:171.9px;font-size:11.8px;color:#000;">Конс.индивидульных:</div>
<div class="t" style="left:838px;top:171.9px;font-size:11.8px;color:#000;">24</div>
<div class="t" style="left:670px;top:186.9px;font-size:11.8px;color:#000;">Конс.групповых:</div>
<div class="t" style="left:838px;top:186.9px;font-size:11.8px;color:#000;">46</div>
<div class="t" style="left:670px;top:201.9px;font-size:11.8px;color:#000;">Занятий:</div>
<div class="t" style="left:838px;top:201.9px;font-size:11.8px;color:#000;">0</div>
<div class="t" style="left:670px;top:216.9px;font-size:11.8px;color:#000;">Всего:</div>
<div class="t" style="left:838px;top:216.9px;font-size:11.8px;color:#000;">70</div>
<div class="t" style="left:856px;top:168.8px;font-size:13.6px;color:#dc3038;">должно быть 5</div>
<div class="t" style="left:856px;top:185.8px;font-size:13.6px;color:#dc3038;">должно быть 6</div>
</body></html>
